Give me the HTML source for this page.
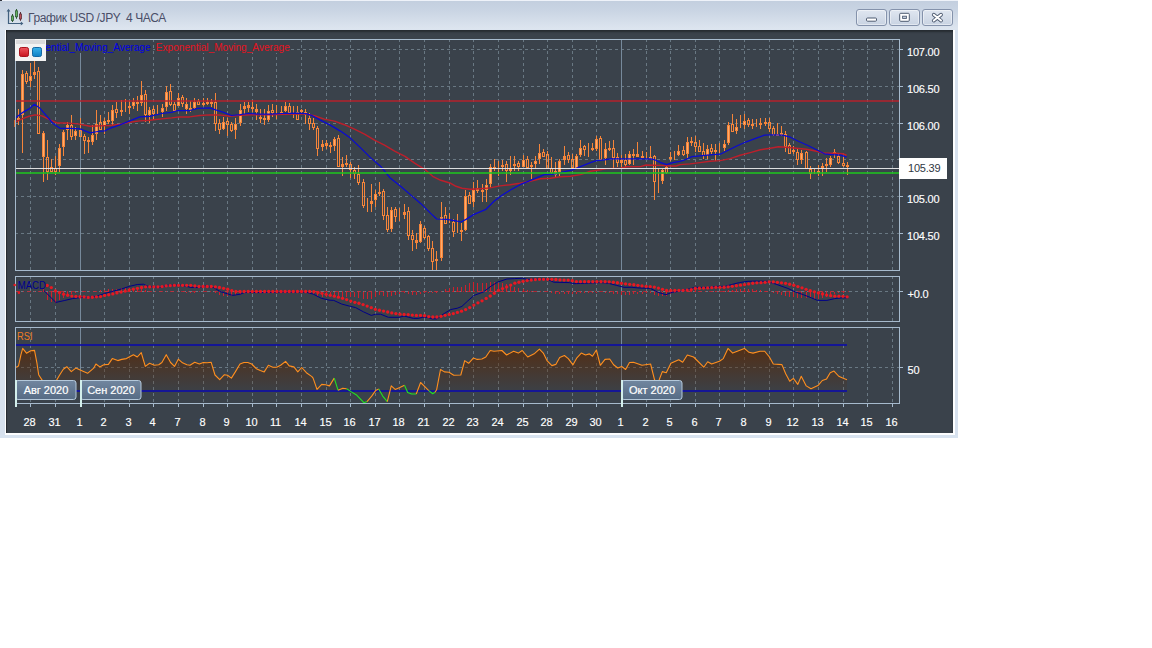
<!DOCTYPE html>
<html lang="ru">
<head>
<meta charset="utf-8">
<title>График USD /JPY 4 ЧАСА</title>
<style>
html,body{margin:0;padding:0;background:#fff;}
body{width:1152px;height:648px;position:relative;overflow:hidden;font-family:"Liberation Sans",sans-serif;}
.win{position:absolute;left:0;top:0;width:958px;height:438px;background:linear-gradient(to bottom,#eef2f9 0,#eef2f9 1px,#c3cfdf 1px,#c9d4e3 10px,#dde5ef 29px,#d7e1ee 31px,#d7e1ee 100%);overflow:hidden;}
.win:before{content:"";position:absolute;left:0;top:0;width:2px;height:1px;background:#30343c;}
.title{position:absolute;left:28px;top:10px;font-size:12px;line-height:16px;color:#4a4e68;white-space:pre;letter-spacing:-0.4px;}
.btn{position:absolute;top:9px;width:29px;height:15px;border:1px solid #8492ab;border-radius:3px;background:linear-gradient(to bottom,#dfe6f0,#c9d3e2);box-shadow:inset 0 0 0 1px rgba(255,255,255,.45);}
.dark{position:absolute;left:6px;top:30px;width:947px;height:403px;background:#3a424b;box-shadow:inset 0 2px 2px rgba(0,0,0,.35), inset 1px 0 0 rgba(0,0,0,.25);}
.rb{position:absolute;left:5px;top:30px;width:950px;height:405px;background:#fdfeff;}
.bb{position:absolute;left:0;top:435px;width:958px;height:3px;background:#d8e3f0;}
.chart{position:absolute;left:0;top:0;}
.chart text{font-family:"Liberation Sans",sans-serif;}
.lg{font-size:11px;}
.ax{font-size:11px;fill:#ffffff;letter-spacing:-0.2px;stroke:#ffffff;stroke-width:0.15px;}
.ml{font-size:11px;fill:#ffffff;stroke:#ffffff;stroke-width:0.2px;}
.ico{position:absolute;left:0;top:0;}
</style>
</head>
<body>
<div class="win">
<svg class="ico" width="28" height="30" viewBox="0 0 28 30">
<path d="M8.5 10 V23.5 H22" fill="none" stroke="#41607f" stroke-width="1.2"/>
<path d="M6.6 11.4 L8.5 8.8 L10.4 11.4 Z M20.8 21.6 L23.4 23.5 L20.8 25.4 Z" fill="#41607f"/>
<g stroke-width="1">
<line x1="12.5" y1="14" x2="12.5" y2="22" stroke="#2f5a33"/><rect x="11.5" y="16" width="2" height="4.5" fill="#63b45f" stroke="#2f5a33" stroke-width="0.8"/>
<line x1="16.5" y1="9" x2="16.5" y2="18.8" stroke="#2f5a33"/><rect x="15.5" y="10.8" width="2" height="6" fill="#63b45f" stroke="#2f5a33" stroke-width="0.8"/>
<line x1="20.5" y1="12" x2="20.5" y2="20.8" stroke="#5a3038"/><rect x="19.5" y="14" width="2" height="5" fill="#c0505a" stroke="#5a3038" stroke-width="0.8"/>
</g>
</svg>
<div class="title">График USD /JPY  4 ЧАСА</div>
<div class="btn" style="left:856px"><svg width="29" height="15" viewBox="0 0 29 15"><rect x="9.5" y="8" width="10" height="3.2" rx="1" fill="#fff" stroke="#4d5a70" stroke-width="1"/></svg></div>
<div class="btn" style="left:889px"><svg width="29" height="15" viewBox="0 0 29 15"><rect x="9.7" y="3.3" width="9.6" height="8" rx="1" fill="#fff" stroke="#4d5a70" stroke-width="1"/><rect x="12.6" y="6.2" width="3.8" height="2.2" fill="#c9d3e2" stroke="#4d5a70" stroke-width="0.9"/></svg></div>
<div class="btn" style="left:922px"><svg width="29" height="15" viewBox="0 0 29 15"><path d="M10.8 4.7 L18.0 10.6 M18.0 4.7 L10.8 10.6" stroke="#4d5a70" stroke-width="3.8" stroke-linecap="round"/><path d="M10.8 4.7 L18.0 10.6 M18.0 4.7 L10.8 10.6" stroke="#fff" stroke-width="2" stroke-linecap="round"/></svg></div>
<div class="rb"></div>
<div class="bb"></div>
<div class="dark"></div>
<svg class="chart" width="958" height="438" viewBox="0 0 958 438">
<defs>
<linearGradient id="rsig" gradientUnits="userSpaceOnUse" x1="0" y1="345" x2="0" y2="392"><stop offset="0" stop-color="#5c2700" stop-opacity="0.78"/><stop offset="0.5" stop-color="#5c2700" stop-opacity="0.40"/><stop offset="1" stop-color="#5c2700" stop-opacity="0.06"/></linearGradient>
<linearGradient id="redsq" x1="0" y1="0" x2="0" y2="1"><stop offset="0" stop-color="#f0565e"/><stop offset="1" stop-color="#c8141f"/></linearGradient>
<linearGradient id="bluesq" x1="0" y1="0" x2="0" y2="1"><stop offset="0" stop-color="#3cb4ea"/><stop offset="1" stop-color="#0f7fc4"/></linearGradient>
<linearGradient id="mlab" x1="0" y1="0" x2="0" y2="1"><stop offset="0" stop-color="#71869f"/><stop offset="1" stop-color="#566b84"/></linearGradient>
<clipPath id="cm"><rect x="16" y="40" width="883" height="230"/></clipPath>
<clipPath id="cd"><rect x="16" y="277" width="883" height="44"/></clipPath>
<clipPath id="cr"><rect x="16" y="328" width="883" height="75"/></clipPath>
</defs>
<g shape-rendering="crispEdges" fill="none" stroke="#697883" stroke-width="1" stroke-dasharray="3 3">
<line x1="30.5" y1="39" x2="30.5" y2="270"/>
<line x1="55.5" y1="39" x2="55.5" y2="270"/>
<line x1="104.5" y1="39" x2="104.5" y2="270"/>
<line x1="129.5" y1="39" x2="129.5" y2="270"/>
<line x1="153.5" y1="39" x2="153.5" y2="270"/>
<line x1="178.5" y1="39" x2="178.5" y2="270"/>
<line x1="203.5" y1="39" x2="203.5" y2="270"/>
<line x1="227.5" y1="39" x2="227.5" y2="270"/>
<line x1="252.5" y1="39" x2="252.5" y2="270"/>
<line x1="276.5" y1="39" x2="276.5" y2="270"/>
<line x1="301.5" y1="39" x2="301.5" y2="270"/>
<line x1="326.5" y1="39" x2="326.5" y2="270"/>
<line x1="350.5" y1="39" x2="350.5" y2="270"/>
<line x1="375.5" y1="39" x2="375.5" y2="270"/>
<line x1="399.5" y1="39" x2="399.5" y2="270"/>
<line x1="424.5" y1="39" x2="424.5" y2="270"/>
<line x1="449.5" y1="39" x2="449.5" y2="270"/>
<line x1="473.5" y1="39" x2="473.5" y2="270"/>
<line x1="498.5" y1="39" x2="498.5" y2="270"/>
<line x1="523.5" y1="39" x2="523.5" y2="270"/>
<line x1="547.5" y1="39" x2="547.5" y2="270"/>
<line x1="572.5" y1="39" x2="572.5" y2="270"/>
<line x1="596.5" y1="39" x2="596.5" y2="270"/>
<line x1="646.5" y1="39" x2="646.5" y2="270"/>
<line x1="670.5" y1="39" x2="670.5" y2="270"/>
<line x1="695.5" y1="39" x2="695.5" y2="270"/>
<line x1="719.5" y1="39" x2="719.5" y2="270"/>
<line x1="744.5" y1="39" x2="744.5" y2="270"/>
<line x1="769.5" y1="39" x2="769.5" y2="270"/>
<line x1="793.5" y1="39" x2="793.5" y2="270"/>
<line x1="818.5" y1="39" x2="818.5" y2="270"/>
<line x1="843.5" y1="39" x2="843.5" y2="270"/>
<line x1="867.5" y1="39" x2="867.5" y2="270"/>
<line x1="892.5" y1="39" x2="892.5" y2="270"/>
<line x1="30.5" y1="276" x2="30.5" y2="321"/>
<line x1="55.5" y1="276" x2="55.5" y2="321"/>
<line x1="104.5" y1="276" x2="104.5" y2="321"/>
<line x1="129.5" y1="276" x2="129.5" y2="321"/>
<line x1="153.5" y1="276" x2="153.5" y2="321"/>
<line x1="178.5" y1="276" x2="178.5" y2="321"/>
<line x1="203.5" y1="276" x2="203.5" y2="321"/>
<line x1="227.5" y1="276" x2="227.5" y2="321"/>
<line x1="252.5" y1="276" x2="252.5" y2="321"/>
<line x1="276.5" y1="276" x2="276.5" y2="321"/>
<line x1="301.5" y1="276" x2="301.5" y2="321"/>
<line x1="326.5" y1="276" x2="326.5" y2="321"/>
<line x1="350.5" y1="276" x2="350.5" y2="321"/>
<line x1="375.5" y1="276" x2="375.5" y2="321"/>
<line x1="399.5" y1="276" x2="399.5" y2="321"/>
<line x1="424.5" y1="276" x2="424.5" y2="321"/>
<line x1="449.5" y1="276" x2="449.5" y2="321"/>
<line x1="473.5" y1="276" x2="473.5" y2="321"/>
<line x1="498.5" y1="276" x2="498.5" y2="321"/>
<line x1="523.5" y1="276" x2="523.5" y2="321"/>
<line x1="547.5" y1="276" x2="547.5" y2="321"/>
<line x1="572.5" y1="276" x2="572.5" y2="321"/>
<line x1="596.5" y1="276" x2="596.5" y2="321"/>
<line x1="646.5" y1="276" x2="646.5" y2="321"/>
<line x1="670.5" y1="276" x2="670.5" y2="321"/>
<line x1="695.5" y1="276" x2="695.5" y2="321"/>
<line x1="719.5" y1="276" x2="719.5" y2="321"/>
<line x1="744.5" y1="276" x2="744.5" y2="321"/>
<line x1="769.5" y1="276" x2="769.5" y2="321"/>
<line x1="793.5" y1="276" x2="793.5" y2="321"/>
<line x1="818.5" y1="276" x2="818.5" y2="321"/>
<line x1="843.5" y1="276" x2="843.5" y2="321"/>
<line x1="867.5" y1="276" x2="867.5" y2="321"/>
<line x1="892.5" y1="276" x2="892.5" y2="321"/>
<line x1="30.5" y1="327" x2="30.5" y2="403"/>
<line x1="55.5" y1="327" x2="55.5" y2="403"/>
<line x1="104.5" y1="327" x2="104.5" y2="403"/>
<line x1="129.5" y1="327" x2="129.5" y2="403"/>
<line x1="153.5" y1="327" x2="153.5" y2="403"/>
<line x1="178.5" y1="327" x2="178.5" y2="403"/>
<line x1="203.5" y1="327" x2="203.5" y2="403"/>
<line x1="227.5" y1="327" x2="227.5" y2="403"/>
<line x1="252.5" y1="327" x2="252.5" y2="403"/>
<line x1="276.5" y1="327" x2="276.5" y2="403"/>
<line x1="301.5" y1="327" x2="301.5" y2="403"/>
<line x1="326.5" y1="327" x2="326.5" y2="403"/>
<line x1="350.5" y1="327" x2="350.5" y2="403"/>
<line x1="375.5" y1="327" x2="375.5" y2="403"/>
<line x1="399.5" y1="327" x2="399.5" y2="403"/>
<line x1="424.5" y1="327" x2="424.5" y2="403"/>
<line x1="449.5" y1="327" x2="449.5" y2="403"/>
<line x1="473.5" y1="327" x2="473.5" y2="403"/>
<line x1="498.5" y1="327" x2="498.5" y2="403"/>
<line x1="523.5" y1="327" x2="523.5" y2="403"/>
<line x1="547.5" y1="327" x2="547.5" y2="403"/>
<line x1="572.5" y1="327" x2="572.5" y2="403"/>
<line x1="596.5" y1="327" x2="596.5" y2="403"/>
<line x1="646.5" y1="327" x2="646.5" y2="403"/>
<line x1="670.5" y1="327" x2="670.5" y2="403"/>
<line x1="695.5" y1="327" x2="695.5" y2="403"/>
<line x1="719.5" y1="327" x2="719.5" y2="403"/>
<line x1="744.5" y1="327" x2="744.5" y2="403"/>
<line x1="769.5" y1="327" x2="769.5" y2="403"/>
<line x1="793.5" y1="327" x2="793.5" y2="403"/>
<line x1="818.5" y1="327" x2="818.5" y2="403"/>
<line x1="843.5" y1="327" x2="843.5" y2="403"/>
<line x1="867.5" y1="327" x2="867.5" y2="403"/>
<line x1="892.5" y1="327" x2="892.5" y2="403"/>
<line x1="15" y1="49.5" x2="899" y2="49.5"/>
<line x1="15" y1="86.5" x2="899" y2="86.5"/>
<line x1="15" y1="123.5" x2="899" y2="123.5"/>
<line x1="15" y1="159.5" x2="899" y2="159.5"/>
<line x1="15" y1="196.5" x2="899" y2="196.5"/>
<line x1="15" y1="233.5" x2="899" y2="233.5"/>
<line x1="15" y1="291.5" x2="899" y2="291.5"/>
<line x1="15" y1="367.5" x2="899" y2="367.5"/>
</g>
<g shape-rendering="crispEdges" stroke="#76899b" stroke-width="1">
<line x1="621.5" y1="39" x2="621.5" y2="270"/>
<line x1="80.5" y1="39" x2="80.5" y2="270"/>
<line x1="621.5" y1="276" x2="621.5" y2="321"/>
<line x1="80.5" y1="276" x2="80.5" y2="321"/>
<line x1="621.5" y1="327" x2="621.5" y2="403"/>
<line x1="80.5" y1="327" x2="80.5" y2="403"/>
</g>
<g shape-rendering="crispEdges" fill="none" stroke="#a6bacd" stroke-width="1">
<rect x="15.5" y="39.5" width="884" height="231"/>
<rect x="15.5" y="276.5" width="884" height="45"/>
<rect x="15.5" y="327.5" width="884" height="76"/>
<line x1="900" y1="49.5" x2="903" y2="49.5"/>
<line x1="900" y1="86.5" x2="903" y2="86.5"/>
<line x1="900" y1="123.5" x2="903" y2="123.5"/>
<line x1="900" y1="196.5" x2="903" y2="196.5"/>
<line x1="900" y1="233.5" x2="903" y2="233.5"/>
<line x1="900" y1="291.5" x2="903" y2="291.5"/>
<line x1="900" y1="367.5" x2="903" y2="367.5"/>
<line x1="30.5" y1="404" x2="30.5" y2="407"/>
<line x1="55.5" y1="404" x2="55.5" y2="407"/>
<line x1="80.5" y1="404" x2="80.5" y2="407"/>
<line x1="104.5" y1="404" x2="104.5" y2="407"/>
<line x1="129.5" y1="404" x2="129.5" y2="407"/>
<line x1="153.5" y1="404" x2="153.5" y2="407"/>
<line x1="178.5" y1="404" x2="178.5" y2="407"/>
<line x1="203.5" y1="404" x2="203.5" y2="407"/>
<line x1="227.5" y1="404" x2="227.5" y2="407"/>
<line x1="252.5" y1="404" x2="252.5" y2="407"/>
<line x1="276.5" y1="404" x2="276.5" y2="407"/>
<line x1="301.5" y1="404" x2="301.5" y2="407"/>
<line x1="326.5" y1="404" x2="326.5" y2="407"/>
<line x1="350.5" y1="404" x2="350.5" y2="407"/>
<line x1="375.5" y1="404" x2="375.5" y2="407"/>
<line x1="399.5" y1="404" x2="399.5" y2="407"/>
<line x1="424.5" y1="404" x2="424.5" y2="407"/>
<line x1="449.5" y1="404" x2="449.5" y2="407"/>
<line x1="473.5" y1="404" x2="473.5" y2="407"/>
<line x1="498.5" y1="404" x2="498.5" y2="407"/>
<line x1="523.5" y1="404" x2="523.5" y2="407"/>
<line x1="547.5" y1="404" x2="547.5" y2="407"/>
<line x1="572.5" y1="404" x2="572.5" y2="407"/>
<line x1="596.5" y1="404" x2="596.5" y2="407"/>
<line x1="621.5" y1="404" x2="621.5" y2="407"/>
<line x1="646.5" y1="404" x2="646.5" y2="407"/>
<line x1="670.5" y1="404" x2="670.5" y2="407"/>
<line x1="695.5" y1="404" x2="695.5" y2="407"/>
<line x1="719.5" y1="404" x2="719.5" y2="407"/>
<line x1="744.5" y1="404" x2="744.5" y2="407"/>
<line x1="769.5" y1="404" x2="769.5" y2="407"/>
<line x1="793.5" y1="404" x2="793.5" y2="407"/>
<line x1="818.5" y1="404" x2="818.5" y2="407"/>
<line x1="843.5" y1="404" x2="843.5" y2="407"/>
<line x1="867.5" y1="404" x2="867.5" y2="407"/>
<line x1="892.5" y1="404" x2="892.5" y2="407"/>
</g>
<rect x="14" y="120" width="1" height="6.5" fill="#c8642c" shape-rendering="crispEdges"/>
<g clip-path="url(#cm)">
<g shape-rendering="crispEdges">
<rect x="18" y="108.9" width="1" height="16.1" fill="#f6853a"/>
<rect x="17" y="118.3" width="3" height="2" fill="#f6853a"/>
<rect x="22" y="70.2" width="1" height="82.6" fill="#f6853a"/>
<rect x="21.5" y="74.5" width="2" height="39.6" fill="#ffac6b" stroke="#f6853a" stroke-width="1"/>
<rect x="26" y="70.9" width="1" height="1.7" fill="#f6853a"/>
<rect x="26" y="82" width="1" height="2" fill="#f6853a"/>
<rect x="25.5" y="73.1" width="2" height="8.4" fill="none" stroke="#f6853a" stroke-width="1"/>
<rect x="30" y="63.2" width="1" height="24" fill="#f6853a"/>
<rect x="29.5" y="76.7" width="2" height="3.8" fill="#ffac6b" stroke="#f6853a" stroke-width="1"/>
<rect x="34" y="44" width="1" height="34.8" fill="#f6853a"/>
<rect x="33" y="72.3" width="3" height="2.5" fill="#f6853a"/>
<rect x="38" y="67.2" width="1" height="3.8" fill="#f6853a"/>
<rect x="37.5" y="71.5" width="2" height="61.75" fill="none" stroke="#f6853a" stroke-width="1"/>
<rect x="43" y="131" width="1" height="51" fill="#f6853a"/>
<rect x="42.5" y="133.1" width="2" height="23.6" fill="#ffac6b" stroke="#f6853a" stroke-width="1"/>
<rect x="47" y="140" width="1" height="17" fill="#f6853a"/>
<rect x="47" y="171.5" width="1" height="8.5" fill="#f6853a"/>
<rect x="46.5" y="157.5" width="2" height="13.5" fill="none" stroke="#f6853a" stroke-width="1"/>
<rect x="51" y="159" width="1" height="7.7" fill="#f6853a"/>
<rect x="51" y="171.5" width="1" height="0.5" fill="#f6853a"/>
<rect x="50.5" y="167.2" width="2" height="3.8" fill="none" stroke="#f6853a" stroke-width="1"/>
<rect x="55" y="155.5" width="1" height="12.1" fill="#f6853a"/>
<rect x="55" y="171.5" width="1" height="3.5" fill="#f6853a"/>
<rect x="54.5" y="168.1" width="2" height="2.9" fill="none" stroke="#f6853a" stroke-width="1"/>
<rect x="59" y="144" width="1" height="28" fill="#f6853a"/>
<rect x="58.5" y="148.5" width="2" height="17" fill="#ffac6b" stroke="#f6853a" stroke-width="1"/>
<rect x="63" y="130" width="1" height="25.5" fill="#f6853a"/>
<rect x="62.5" y="132.2" width="2" height="14.3" fill="#ffac6b" stroke="#f6853a" stroke-width="1"/>
<rect x="67" y="121.5" width="1" height="18.5" fill="#f6853a"/>
<rect x="66.5" y="125.2" width="2" height="4.3" fill="#ffac6b" stroke="#f6853a" stroke-width="1"/>
<rect x="71" y="115" width="1" height="9.7" fill="#f6853a"/>
<rect x="71" y="136.8" width="1" height="3.2" fill="#f6853a"/>
<rect x="70.5" y="125.2" width="2" height="11.1" fill="none" stroke="#f6853a" stroke-width="1"/>
<rect x="75" y="127" width="1" height="13" fill="#f6853a"/>
<rect x="74.5" y="131.3" width="2" height="4.6" fill="#ffac6b" stroke="#f6853a" stroke-width="1"/>
<rect x="80" y="118" width="1" height="12" fill="#f6853a"/>
<rect x="79.5" y="130.5" width="2" height="5.8" fill="none" stroke="#f6853a" stroke-width="1"/>
<rect x="84" y="134" width="1" height="1.8" fill="#f6853a"/>
<rect x="84" y="141" width="1" height="13" fill="#f6853a"/>
<rect x="83.5" y="136.3" width="2" height="4.2" fill="none" stroke="#f6853a" stroke-width="1"/>
<rect x="88" y="137" width="1" height="15.8" fill="#f6853a"/>
<rect x="87" y="140" width="3" height="2.4" fill="#f6853a"/>
<rect x="92" y="124.7" width="1" height="20.3" fill="#f6853a"/>
<rect x="91.5" y="135.2" width="2" height="6.7" fill="#ffac6b" stroke="#f6853a" stroke-width="1"/>
<rect x="96" y="110" width="1" height="30" fill="#f6853a"/>
<rect x="95.5" y="124.8" width="2" height="8.3" fill="#ffac6b" stroke="#f6853a" stroke-width="1"/>
<rect x="100" y="115" width="1" height="7" fill="#f6853a"/>
<rect x="99.5" y="122.5" width="2" height="7" fill="none" stroke="#f6853a" stroke-width="1"/>
<rect x="104" y="117.8" width="1" height="16.2" fill="#f6853a"/>
<rect x="103.5" y="121.3" width="2" height="4.6" fill="#ffac6b" stroke="#f6853a" stroke-width="1"/>
<rect x="108" y="112.2" width="1" height="11.4" fill="#f6853a"/>
<rect x="107" y="120" width="3" height="2" fill="#f6853a"/>
<rect x="112" y="105.3" width="1" height="19.4" fill="#f6853a"/>
<rect x="111.5" y="110.5" width="2" height="9.5" fill="#ffac6b" stroke="#f6853a" stroke-width="1"/>
<rect x="116" y="102" width="1" height="7" fill="#f6853a"/>
<rect x="116" y="112.8" width="1" height="5.2" fill="#f6853a"/>
<rect x="115.5" y="109.5" width="2" height="2.8" fill="none" stroke="#f6853a" stroke-width="1"/>
<rect x="121" y="100.3" width="1" height="15.7" fill="#f6853a"/>
<rect x="120" y="110" width="3" height="2" fill="#f6853a"/>
<rect x="125" y="98.9" width="1" height="13.2" fill="#f6853a"/>
<rect x="129" y="101.4" width="1" height="12.6" fill="#f6853a"/>
<rect x="128" y="106.3" width="3" height="2" fill="#f6853a"/>
<rect x="133" y="98.2" width="1" height="11" fill="#f6853a"/>
<rect x="132.5" y="102.1" width="2" height="3.1" fill="#ffac6b" stroke="#f6853a" stroke-width="1"/>
<rect x="137" y="96.1" width="1" height="14.7" fill="#f6853a"/>
<rect x="136" y="101.7" width="3" height="2.7" fill="#f6853a"/>
<rect x="141" y="80.8" width="1" height="24.9" fill="#f6853a"/>
<rect x="140.5" y="95.2" width="2" height="7.3" fill="#ffac6b" stroke="#f6853a" stroke-width="1"/>
<rect x="145" y="89.9" width="1" height="4.1" fill="#f6853a"/>
<rect x="145" y="115.4" width="1" height="6.8" fill="#f6853a"/>
<rect x="144.5" y="94.5" width="2" height="20.4" fill="none" stroke="#f6853a" stroke-width="1"/>
<rect x="149" y="107" width="1" height="16" fill="#f6853a"/>
<rect x="148.5" y="110.9" width="2" height="3.2" fill="#ffac6b" stroke="#f6853a" stroke-width="1"/>
<rect x="153" y="105.5" width="1" height="3.5" fill="#f6853a"/>
<rect x="153" y="113.9" width="1" height="6.1" fill="#f6853a"/>
<rect x="152.5" y="109.5" width="2" height="3.9" fill="none" stroke="#f6853a" stroke-width="1"/>
<rect x="157" y="104.9" width="1" height="9" fill="#f6853a"/>
<rect x="162" y="104" width="1" height="12.6" fill="#f6853a"/>
<rect x="161.5" y="108.2" width="2" height="3" fill="#ffac6b" stroke="#f6853a" stroke-width="1"/>
<rect x="166" y="86.4" width="1" height="25" fill="#f6853a"/>
<rect x="165.5" y="92.7" width="2" height="13.6" fill="#ffac6b" stroke="#f6853a" stroke-width="1"/>
<rect x="170" y="83.9" width="1" height="7.2" fill="#f6853a"/>
<rect x="170" y="104.7" width="1" height="1.1" fill="#f6853a"/>
<rect x="169.5" y="91.6" width="2" height="12.6" fill="none" stroke="#f6853a" stroke-width="1"/>
<rect x="174" y="102.2" width="1" height="1.8" fill="#f6853a"/>
<rect x="173.5" y="104.5" width="2" height="5.6" fill="none" stroke="#f6853a" stroke-width="1"/>
<rect x="178" y="92.9" width="1" height="13.5" fill="#f6853a"/>
<rect x="177.5" y="98.7" width="2" height="6.6" fill="#ffac6b" stroke="#f6853a" stroke-width="1"/>
<rect x="182" y="95" width="1" height="2.1" fill="#f6853a"/>
<rect x="182" y="104.4" width="1" height="2.4" fill="#f6853a"/>
<rect x="181.5" y="97.6" width="2" height="6.3" fill="none" stroke="#f6853a" stroke-width="1"/>
<rect x="186" y="98.2" width="1" height="16" fill="#f6853a"/>
<rect x="185.5" y="104.5" width="2" height="3.9" fill="#ffac6b" stroke="#f6853a" stroke-width="1"/>
<rect x="190" y="100.6" width="1" height="11.1" fill="#f6853a"/>
<rect x="189" y="108.2" width="3" height="2" fill="#f6853a"/>
<rect x="194" y="98.2" width="1" height="10.7" fill="#f6853a"/>
<rect x="193.5" y="102.2" width="2" height="5.1" fill="#ffac6b" stroke="#f6853a" stroke-width="1"/>
<rect x="198" y="99.2" width="1" height="2.05" fill="#f6853a"/>
<rect x="197.5" y="101.75" width="2" height="2.45" fill="none" stroke="#f6853a" stroke-width="1"/>
<rect x="203" y="98.2" width="1" height="8.2" fill="#f6853a"/>
<rect x="202" y="102.6" width="3" height="2" fill="#f6853a"/>
<rect x="207" y="97.8" width="1" height="7.6" fill="#f6853a"/>
<rect x="206" y="101.7" width="3" height="2.3" fill="#f6853a"/>
<rect x="211" y="99.2" width="1" height="8" fill="#f6853a"/>
<rect x="210" y="102.2" width="3" height="2" fill="#f6853a"/>
<rect x="215" y="92.9" width="1" height="8.8" fill="#f6853a"/>
<rect x="215" y="123.5" width="1" height="7.3" fill="#f6853a"/>
<rect x="214.5" y="102.2" width="2" height="20.8" fill="none" stroke="#f6853a" stroke-width="1"/>
<rect x="219" y="118.9" width="1" height="3.9" fill="#f6853a"/>
<rect x="219" y="129.7" width="1" height="4.2" fill="#f6853a"/>
<rect x="218.5" y="123.3" width="2" height="5.9" fill="none" stroke="#f6853a" stroke-width="1"/>
<rect x="223" y="116.5" width="1" height="13.5" fill="#f6853a"/>
<rect x="222.5" y="122.5" width="2" height="6" fill="#ffac6b" stroke="#f6853a" stroke-width="1"/>
<rect x="227" y="117.9" width="1" height="3.2" fill="#f6853a"/>
<rect x="227" y="124.9" width="1" height="11.1" fill="#f6853a"/>
<rect x="226.5" y="121.6" width="2" height="2.8" fill="none" stroke="#f6853a" stroke-width="1"/>
<rect x="231" y="122" width="1" height="2.2" fill="#f6853a"/>
<rect x="231" y="131.1" width="1" height="0.7" fill="#f6853a"/>
<rect x="230.5" y="124.7" width="2" height="5.9" fill="none" stroke="#f6853a" stroke-width="1"/>
<rect x="235" y="117.9" width="1" height="20.85" fill="#f6853a"/>
<rect x="234.5" y="124.7" width="2" height="4.8" fill="#ffac6b" stroke="#f6853a" stroke-width="1"/>
<rect x="240" y="104" width="1" height="21.6" fill="#f6853a"/>
<rect x="239.5" y="110.8" width="2" height="11.5" fill="#ffac6b" stroke="#f6853a" stroke-width="1"/>
<rect x="244" y="102.2" width="1" height="11.55" fill="#f6853a"/>
<rect x="243" y="106.1" width="3" height="2.8" fill="#f6853a"/>
<rect x="248" y="102.2" width="1" height="9.5" fill="#f6853a"/>
<rect x="247" y="105.4" width="3" height="2.1" fill="#f6853a"/>
<rect x="252" y="99.9" width="1" height="12.5" fill="#f6853a"/>
<rect x="251" y="106.8" width="3" height="2.4" fill="#f6853a"/>
<rect x="256" y="104" width="1" height="16" fill="#f6853a"/>
<rect x="255" y="108.9" width="3" height="2.8" fill="#f6853a"/>
<rect x="260" y="108.9" width="1" height="13.9" fill="#f6853a"/>
<rect x="259" y="116.5" width="3" height="2" fill="#f6853a"/>
<rect x="264" y="109.2" width="1" height="15.7" fill="#f6853a"/>
<rect x="263" y="117.9" width="3" height="2.4" fill="#f6853a"/>
<rect x="268" y="105" width="1" height="17" fill="#f6853a"/>
<rect x="267.5" y="111.9" width="2" height="7.9" fill="#ffac6b" stroke="#f6853a" stroke-width="1"/>
<rect x="272" y="104" width="1" height="6" fill="#f6853a"/>
<rect x="272" y="113.3" width="1" height="3.2" fill="#f6853a"/>
<rect x="271.5" y="110.5" width="2" height="2.3" fill="none" stroke="#f6853a" stroke-width="1"/>
<rect x="276" y="105.4" width="1" height="13.2" fill="#f6853a"/>
<rect x="281" y="105.8" width="1" height="7.95" fill="#f6853a"/>
<rect x="280" y="111.7" width="3" height="2" fill="#f6853a"/>
<rect x="285" y="102.2" width="1" height="10.2" fill="#f6853a"/>
<rect x="284.5" y="106.9" width="2" height="4" fill="#ffac6b" stroke="#f6853a" stroke-width="1"/>
<rect x="289" y="103" width="1" height="2.8" fill="#f6853a"/>
<rect x="288.5" y="106.3" width="2" height="6" fill="none" stroke="#f6853a" stroke-width="1"/>
<rect x="293" y="106.1" width="1" height="11.8" fill="#f6853a"/>
<rect x="297" y="106.1" width="1" height="5.6" fill="#f6853a"/>
<rect x="296.5" y="112.2" width="2" height="7" fill="none" stroke="#f6853a" stroke-width="1"/>
<rect x="301" y="108.9" width="1" height="4.4" fill="#f6853a"/>
<rect x="300" y="110.3" width="3" height="2.1" fill="#f6853a"/>
<rect x="305" y="108.9" width="1" height="14.6" fill="#f6853a"/>
<rect x="304" y="112.4" width="3" height="2.3" fill="#f6853a"/>
<rect x="309" y="113" width="1" height="4.9" fill="#f6853a"/>
<rect x="309" y="124.2" width="1" height="5.8" fill="#f6853a"/>
<rect x="308.5" y="118.4" width="2" height="5.3" fill="none" stroke="#f6853a" stroke-width="1"/>
<rect x="313" y="117.9" width="1" height="5.1" fill="#f6853a"/>
<rect x="313" y="128.4" width="1" height="1.6" fill="#f6853a"/>
<rect x="312.5" y="123.5" width="2" height="4.4" fill="none" stroke="#f6853a" stroke-width="1"/>
<rect x="317" y="125.7" width="1" height="2" fill="#f6853a"/>
<rect x="317" y="148.9" width="1" height="6.6" fill="#f6853a"/>
<rect x="316.5" y="128.2" width="2" height="20.2" fill="none" stroke="#f6853a" stroke-width="1"/>
<rect x="322" y="140.3" width="1" height="10.4" fill="#f6853a"/>
<rect x="321" y="144.2" width="3" height="3" fill="#f6853a"/>
<rect x="326" y="140.3" width="1" height="9" fill="#f6853a"/>
<rect x="325" y="143" width="3" height="2.8" fill="#f6853a"/>
<rect x="330" y="142.4" width="1" height="10.4" fill="#f6853a"/>
<rect x="329" y="145" width="3" height="2" fill="#f6853a"/>
<rect x="334" y="137.2" width="1" height="13.5" fill="#f6853a"/>
<rect x="333.5" y="139.7" width="2" height="5.4" fill="#ffac6b" stroke="#f6853a" stroke-width="1"/>
<rect x="338" y="135" width="1" height="3.2" fill="#f6853a"/>
<rect x="337.5" y="138.7" width="2" height="28.2" fill="none" stroke="#f6853a" stroke-width="1"/>
<rect x="342" y="156.9" width="1" height="18.8" fill="#f6853a"/>
<rect x="341" y="164.2" width="3" height="2.5" fill="#f6853a"/>
<rect x="346" y="154.9" width="1" height="12.5" fill="#f6853a"/>
<rect x="345" y="163.2" width="3" height="2" fill="#f6853a"/>
<rect x="350" y="161.8" width="1" height="2.1" fill="#f6853a"/>
<rect x="350" y="170.1" width="1" height="7.7" fill="#f6853a"/>
<rect x="349.5" y="164.4" width="2" height="5.2" fill="none" stroke="#f6853a" stroke-width="1"/>
<rect x="354" y="167.4" width="1" height="2.7" fill="#f6853a"/>
<rect x="354" y="174.3" width="1" height="4.2" fill="#f6853a"/>
<rect x="353.5" y="170.6" width="2" height="3.2" fill="none" stroke="#f6853a" stroke-width="1"/>
<rect x="358" y="164.6" width="1" height="9.7" fill="#f6853a"/>
<rect x="358" y="182.7" width="1" height="2.1" fill="#f6853a"/>
<rect x="357.5" y="174.8" width="2" height="7.4" fill="none" stroke="#f6853a" stroke-width="1"/>
<rect x="363" y="179.4" width="1" height="2.6" fill="#f6853a"/>
<rect x="363" y="206.4" width="1" height="1.4" fill="#f6853a"/>
<rect x="362.5" y="182.5" width="2" height="23.4" fill="none" stroke="#f6853a" stroke-width="1"/>
<rect x="367" y="198" width="1" height="14" fill="#f6853a"/>
<rect x="371" y="184.2" width="1" height="27.5" fill="#f6853a"/>
<rect x="370" y="200.8" width="3" height="2.8" fill="#f6853a"/>
<rect x="375" y="189.7" width="1" height="17.3" fill="#f6853a"/>
<rect x="374.5" y="194.4" width="2" height="5.2" fill="#ffac6b" stroke="#f6853a" stroke-width="1"/>
<rect x="379" y="182" width="1" height="13.6" fill="#f6853a"/>
<rect x="378" y="191.8" width="3" height="2.1" fill="#f6853a"/>
<rect x="383" y="189" width="1" height="2.1" fill="#f6853a"/>
<rect x="383" y="215.8" width="1" height="4.2" fill="#f6853a"/>
<rect x="382.5" y="191.6" width="2" height="23.7" fill="none" stroke="#f6853a" stroke-width="1"/>
<rect x="387" y="207" width="1" height="7.7" fill="#f6853a"/>
<rect x="387" y="230" width="1" height="2" fill="#f6853a"/>
<rect x="386.5" y="215.2" width="2" height="14.3" fill="none" stroke="#f6853a" stroke-width="1"/>
<rect x="391" y="207" width="1" height="24.7" fill="#f6853a"/>
<rect x="390.5" y="210.4" width="2" height="18.4" fill="#ffac6b" stroke="#f6853a" stroke-width="1"/>
<rect x="395" y="207" width="1" height="1.5" fill="#f6853a"/>
<rect x="395" y="216.8" width="1" height="4.9" fill="#f6853a"/>
<rect x="394.5" y="209" width="2" height="7.3" fill="none" stroke="#f6853a" stroke-width="1"/>
<rect x="399" y="207.5" width="1" height="13.9" fill="#f6853a"/>
<rect x="404" y="203.9" width="1" height="15" fill="#f6853a"/>
<rect x="403" y="212" width="3" height="2.7" fill="#f6853a"/>
<rect x="408" y="207" width="1" height="3.8" fill="#f6853a"/>
<rect x="408" y="235.6" width="1" height="4.4" fill="#f6853a"/>
<rect x="407.5" y="211.3" width="2" height="23.8" fill="none" stroke="#f6853a" stroke-width="1"/>
<rect x="412" y="230" width="1" height="4.9" fill="#f6853a"/>
<rect x="412" y="240.4" width="1" height="10.4" fill="#f6853a"/>
<rect x="411.5" y="235.4" width="2" height="4.5" fill="none" stroke="#f6853a" stroke-width="1"/>
<rect x="416" y="232.8" width="1" height="16.2" fill="#f6853a"/>
<rect x="415" y="240" width="3" height="2.5" fill="#f6853a"/>
<rect x="420" y="221" width="1" height="21.8" fill="#f6853a"/>
<rect x="419.5" y="224.25" width="2" height="17.05" fill="#ffac6b" stroke="#f6853a" stroke-width="1"/>
<rect x="424" y="225.8" width="1" height="2.1" fill="#f6853a"/>
<rect x="424" y="238.3" width="1" height="1.1" fill="#f6853a"/>
<rect x="423.5" y="228.4" width="2" height="9.4" fill="none" stroke="#f6853a" stroke-width="1"/>
<rect x="428" y="234.9" width="1" height="1.35" fill="#f6853a"/>
<rect x="428" y="248.75" width="1" height="2.05" fill="#f6853a"/>
<rect x="427.5" y="236.75" width="2" height="11.5" fill="none" stroke="#f6853a" stroke-width="1"/>
<rect x="432" y="241.1" width="1" height="6.9" fill="#f6853a"/>
<rect x="432" y="262" width="1" height="8" fill="#f6853a"/>
<rect x="431.5" y="248.5" width="2" height="13" fill="none" stroke="#f6853a" stroke-width="1"/>
<rect x="436" y="250.8" width="1" height="19.2" fill="#f6853a"/>
<rect x="435" y="259.2" width="3" height="2" fill="#f6853a"/>
<rect x="441" y="202.2" width="1" height="58.4" fill="#f6853a"/>
<rect x="440.5" y="217.3" width="2" height="39.7" fill="#ffac6b" stroke="#f6853a" stroke-width="1"/>
<rect x="445" y="207" width="1" height="8.4" fill="#f6853a"/>
<rect x="444.5" y="215.9" width="2" height="7.35" fill="none" stroke="#f6853a" stroke-width="1"/>
<rect x="449" y="213" width="1" height="10" fill="#f6853a"/>
<rect x="453" y="218.9" width="1" height="2.8" fill="#f6853a"/>
<rect x="453" y="232" width="1" height="5" fill="#f6853a"/>
<rect x="452.5" y="222.2" width="2" height="9.3" fill="none" stroke="#f6853a" stroke-width="1"/>
<rect x="457" y="214" width="1" height="18.8" fill="#f6853a"/>
<rect x="461" y="223" width="1" height="17.8" fill="#f6853a"/>
<rect x="460" y="230" width="3" height="2" fill="#f6853a"/>
<rect x="465" y="190.4" width="1" height="40.6" fill="#f6853a"/>
<rect x="464.5" y="196.5" width="2" height="33" fill="#ffac6b" stroke="#f6853a" stroke-width="1"/>
<rect x="469" y="192.2" width="1" height="3.1" fill="#f6853a"/>
<rect x="468.5" y="195.8" width="2" height="7.3" fill="none" stroke="#f6853a" stroke-width="1"/>
<rect x="473" y="182" width="1" height="25" fill="#f6853a"/>
<rect x="472.5" y="190.3" width="2" height="11.2" fill="#ffac6b" stroke="#f6853a" stroke-width="1"/>
<rect x="477" y="179.7" width="1" height="12.8" fill="#f6853a"/>
<rect x="476" y="188.2" width="3" height="2.4" fill="#f6853a"/>
<rect x="482" y="184" width="1" height="18" fill="#f6853a"/>
<rect x="481" y="190" width="3" height="2" fill="#f6853a"/>
<rect x="486" y="179" width="1" height="23" fill="#f6853a"/>
<rect x="485.5" y="185.5" width="2" height="4" fill="#ffac6b" stroke="#f6853a" stroke-width="1"/>
<rect x="490" y="164.2" width="1" height="23.8" fill="#f6853a"/>
<rect x="489.5" y="167.7" width="2" height="15.6" fill="#ffac6b" stroke="#f6853a" stroke-width="1"/>
<rect x="494" y="159.2" width="1" height="12.2" fill="#f6853a"/>
<rect x="493" y="166.5" width="3" height="2" fill="#f6853a"/>
<rect x="498" y="161.4" width="1" height="14.2" fill="#f6853a"/>
<rect x="502" y="159.6" width="1" height="11.1" fill="#f6853a"/>
<rect x="501" y="164.7" width="3" height="2.5" fill="#f6853a"/>
<rect x="506" y="161" width="1" height="3.4" fill="#f6853a"/>
<rect x="506" y="171.4" width="1" height="10.4" fill="#f6853a"/>
<rect x="505.5" y="164.9" width="2" height="6" fill="none" stroke="#f6853a" stroke-width="1"/>
<rect x="510" y="156.1" width="1" height="18.8" fill="#f6853a"/>
<rect x="509" y="167.9" width="3" height="2.8" fill="#f6853a"/>
<rect x="514" y="156.1" width="1" height="14.6" fill="#f6853a"/>
<rect x="513" y="164.2" width="3" height="2" fill="#f6853a"/>
<rect x="518" y="161" width="1" height="2" fill="#f6853a"/>
<rect x="518" y="167.2" width="1" height="3.5" fill="#f6853a"/>
<rect x="517.5" y="163.5" width="2" height="3.2" fill="none" stroke="#f6853a" stroke-width="1"/>
<rect x="523" y="154.7" width="1" height="11.8" fill="#f6853a"/>
<rect x="522.5" y="160.5" width="2" height="5.5" fill="#ffac6b" stroke="#f6853a" stroke-width="1"/>
<rect x="527" y="156.4" width="1" height="2.8" fill="#f6853a"/>
<rect x="526.5" y="159.7" width="2" height="7.7" fill="none" stroke="#f6853a" stroke-width="1"/>
<rect x="531" y="161.7" width="1" height="17.3" fill="#f6853a"/>
<rect x="530" y="165.1" width="3" height="2.1" fill="#f6853a"/>
<rect x="535" y="156.1" width="1" height="11.8" fill="#f6853a"/>
<rect x="534.5" y="161.1" width="2" height="2.6" fill="#ffac6b" stroke="#f6853a" stroke-width="1"/>
<rect x="539" y="144.3" width="1" height="19.45" fill="#f6853a"/>
<rect x="538.5" y="153.5" width="2" height="5.2" fill="#ffac6b" stroke="#f6853a" stroke-width="1"/>
<rect x="543" y="148.5" width="1" height="3.7" fill="#f6853a"/>
<rect x="542.5" y="152.7" width="2" height="3.6" fill="none" stroke="#f6853a" stroke-width="1"/>
<rect x="547" y="151.25" width="1" height="2.75" fill="#f6853a"/>
<rect x="547" y="168.6" width="1" height="0.7" fill="#f6853a"/>
<rect x="546.5" y="154.5" width="2" height="13.6" fill="none" stroke="#f6853a" stroke-width="1"/>
<rect x="551" y="157.2" width="1" height="10.7" fill="#f6853a"/>
<rect x="551" y="172.8" width="1" height="0.7" fill="#f6853a"/>
<rect x="550.5" y="168.4" width="2" height="3.9" fill="none" stroke="#f6853a" stroke-width="1"/>
<rect x="555" y="162.4" width="1" height="15.2" fill="#f6853a"/>
<rect x="554.5" y="171.9" width="2" height="2.5" fill="#ffac6b" stroke="#f6853a" stroke-width="1"/>
<rect x="559" y="159.2" width="1" height="16.4" fill="#f6853a"/>
<rect x="558.5" y="161.5" width="2" height="10" fill="#ffac6b" stroke="#f6853a" stroke-width="1"/>
<rect x="564" y="146.1" width="1" height="18.6" fill="#f6853a"/>
<rect x="563" y="156.4" width="3" height="3.2" fill="#f6853a"/>
<rect x="568" y="152.2" width="1" height="2.8" fill="#f6853a"/>
<rect x="568" y="160.3" width="1" height="2.5" fill="#f6853a"/>
<rect x="567.5" y="155.5" width="2" height="4.3" fill="none" stroke="#f6853a" stroke-width="1"/>
<rect x="572" y="154" width="1" height="5.2" fill="#f6853a"/>
<rect x="572" y="167.9" width="1" height="1.4" fill="#f6853a"/>
<rect x="571.5" y="159.7" width="2" height="7.7" fill="none" stroke="#f6853a" stroke-width="1"/>
<rect x="576" y="154.4" width="1" height="13.5" fill="#f6853a"/>
<rect x="575.5" y="156.6" width="2" height="10.8" fill="#ffac6b" stroke="#f6853a" stroke-width="1"/>
<rect x="580" y="140.1" width="1" height="16.7" fill="#f6853a"/>
<rect x="579.5" y="148" width="2" height="6.2" fill="#ffac6b" stroke="#f6853a" stroke-width="1"/>
<rect x="584" y="144.7" width="1" height="1.4" fill="#f6853a"/>
<rect x="584" y="149.9" width="1" height="5.9" fill="#f6853a"/>
<rect x="583.5" y="146.6" width="2" height="2.8" fill="none" stroke="#f6853a" stroke-width="1"/>
<rect x="588" y="143.3" width="1" height="13.5" fill="#f6853a"/>
<rect x="592" y="143.3" width="1" height="7.5" fill="#f6853a"/>
<rect x="591" y="148.2" width="3" height="2" fill="#f6853a"/>
<rect x="596" y="136" width="1" height="14.8" fill="#f6853a"/>
<rect x="595.5" y="139.7" width="2" height="9" fill="#ffac6b" stroke="#f6853a" stroke-width="1"/>
<rect x="600" y="136" width="1" height="2" fill="#f6853a"/>
<rect x="599.5" y="138.5" width="2" height="20.6" fill="none" stroke="#f6853a" stroke-width="1"/>
<rect x="605" y="143.3" width="1" height="21.4" fill="#f6853a"/>
<rect x="604.5" y="149.4" width="2" height="8.3" fill="#ffac6b" stroke="#f6853a" stroke-width="1"/>
<rect x="609" y="141.1" width="1" height="9.7" fill="#f6853a"/>
<rect x="608" y="147.8" width="3" height="2" fill="#f6853a"/>
<rect x="613" y="140.1" width="1" height="8.1" fill="#f6853a"/>
<rect x="613" y="157.5" width="1" height="10.4" fill="#f6853a"/>
<rect x="612.5" y="148.7" width="2" height="8.3" fill="none" stroke="#f6853a" stroke-width="1"/>
<rect x="617" y="153.3" width="1" height="3.9" fill="#f6853a"/>
<rect x="617" y="163" width="1" height="3.5" fill="#f6853a"/>
<rect x="616.5" y="157.7" width="2" height="4.8" fill="none" stroke="#f6853a" stroke-width="1"/>
<rect x="621" y="155" width="1" height="12.7" fill="#f6853a"/>
<rect x="620" y="160.3" width="3" height="2.5" fill="#f6853a"/>
<rect x="625" y="154.1" width="1" height="5.5" fill="#f6853a"/>
<rect x="625" y="164.8" width="1" height="2.2" fill="#f6853a"/>
<rect x="624.5" y="160.1" width="2" height="4.2" fill="none" stroke="#f6853a" stroke-width="1"/>
<rect x="629" y="151" width="1" height="13.9" fill="#f6853a"/>
<rect x="628.5" y="154.7" width="2" height="9" fill="#ffac6b" stroke="#f6853a" stroke-width="1"/>
<rect x="633" y="149.2" width="1" height="15.7" fill="#f6853a"/>
<rect x="632" y="153.75" width="3" height="2" fill="#f6853a"/>
<rect x="637" y="142.2" width="1" height="15" fill="#f6853a"/>
<rect x="636" y="154.2" width="3" height="3" fill="#f6853a"/>
<rect x="642" y="151" width="1" height="6.9" fill="#f6853a"/>
<rect x="641" y="155.8" width="3" height="2.1" fill="#f6853a"/>
<rect x="646" y="151.7" width="1" height="6.9" fill="#f6853a"/>
<rect x="650" y="145.8" width="1" height="12.8" fill="#f6853a"/>
<rect x="649" y="156.5" width="3" height="2" fill="#f6853a"/>
<rect x="654" y="154.7" width="1" height="1.1" fill="#f6853a"/>
<rect x="654" y="182.2" width="1" height="18.1" fill="#f6853a"/>
<rect x="653.5" y="156.3" width="2" height="25.4" fill="none" stroke="#f6853a" stroke-width="1"/>
<rect x="658" y="168.3" width="1" height="24.3" fill="#f6853a"/>
<rect x="662" y="169" width="1" height="14.6" fill="#f6853a"/>
<rect x="661.5" y="170.9" width="2" height="9.4" fill="#ffac6b" stroke="#f6853a" stroke-width="1"/>
<rect x="666" y="164.9" width="1" height="2" fill="#f6853a"/>
<rect x="666" y="173.2" width="1" height="0.7" fill="#f6853a"/>
<rect x="665.5" y="167.4" width="2" height="5.3" fill="none" stroke="#f6853a" stroke-width="1"/>
<rect x="670" y="151.7" width="1" height="9.7" fill="#f6853a"/>
<rect x="669" y="157.2" width="3" height="2" fill="#f6853a"/>
<rect x="674" y="151" width="1" height="9" fill="#f6853a"/>
<rect x="678" y="145" width="1" height="10.8" fill="#f6853a"/>
<rect x="677.5" y="151.5" width="2" height="3.1" fill="#ffac6b" stroke="#f6853a" stroke-width="1"/>
<rect x="683" y="146.1" width="1" height="4.2" fill="#f6853a"/>
<rect x="683" y="155.1" width="1" height="0.7" fill="#f6853a"/>
<rect x="682.5" y="150.8" width="2" height="3.8" fill="none" stroke="#f6853a" stroke-width="1"/>
<rect x="687" y="137.1" width="1" height="20.8" fill="#f6853a"/>
<rect x="686.5" y="142.7" width="2" height="11" fill="#ffac6b" stroke="#f6853a" stroke-width="1"/>
<rect x="691" y="137.1" width="1" height="9" fill="#f6853a"/>
<rect x="690" y="141.25" width="3" height="2" fill="#f6853a"/>
<rect x="695" y="135.7" width="1" height="6.5" fill="#f6853a"/>
<rect x="695" y="146.8" width="1" height="4.9" fill="#f6853a"/>
<rect x="694.5" y="142.7" width="2" height="3.6" fill="none" stroke="#f6853a" stroke-width="1"/>
<rect x="699" y="139.9" width="1" height="6.2" fill="#f6853a"/>
<rect x="698.5" y="146.6" width="2" height="4.6" fill="none" stroke="#f6853a" stroke-width="1"/>
<rect x="703" y="143" width="1" height="8" fill="#f6853a"/>
<rect x="703" y="155.8" width="1" height="2.8" fill="#f6853a"/>
<rect x="702.5" y="151.5" width="2" height="3.8" fill="none" stroke="#f6853a" stroke-width="1"/>
<rect x="707" y="145" width="1" height="14.3" fill="#f6853a"/>
<rect x="706.5" y="149.7" width="2" height="4.5" fill="#ffac6b" stroke="#f6853a" stroke-width="1"/>
<rect x="711" y="144" width="1" height="4.2" fill="#f6853a"/>
<rect x="711" y="151.7" width="1" height="2.7" fill="#f6853a"/>
<rect x="710.5" y="148.7" width="2" height="2.5" fill="none" stroke="#f6853a" stroke-width="1"/>
<rect x="715" y="144" width="1" height="16.7" fill="#f6853a"/>
<rect x="714" y="149.6" width="3" height="2.1" fill="#f6853a"/>
<rect x="719" y="143.3" width="1" height="9.7" fill="#f6853a"/>
<rect x="724" y="139.9" width="1" height="11.1" fill="#f6853a"/>
<rect x="723.5" y="144.5" width="2" height="3.2" fill="#ffac6b" stroke="#f6853a" stroke-width="1"/>
<rect x="728" y="122.2" width="1" height="22.5" fill="#f6853a"/>
<rect x="727.5" y="125.1" width="2" height="17.4" fill="#ffac6b" stroke="#f6853a" stroke-width="1"/>
<rect x="732" y="114.2" width="1" height="9.7" fill="#f6853a"/>
<rect x="731.5" y="124.4" width="2" height="6.6" fill="none" stroke="#f6853a" stroke-width="1"/>
<rect x="736" y="119" width="1" height="14.9" fill="#f6853a"/>
<rect x="735.5" y="127.4" width="2" height="2.9" fill="#ffac6b" stroke="#f6853a" stroke-width="1"/>
<rect x="740" y="114.9" width="1" height="12.9" fill="#f6853a"/>
<rect x="744" y="113.9" width="1" height="15.3" fill="#f6853a"/>
<rect x="743.5" y="121.9" width="2" height="2.6" fill="#ffac6b" stroke="#f6853a" stroke-width="1"/>
<rect x="748" y="118" width="1" height="1.7" fill="#f6853a"/>
<rect x="748" y="125" width="1" height="2.4" fill="#f6853a"/>
<rect x="747.5" y="120.2" width="2" height="4.3" fill="none" stroke="#f6853a" stroke-width="1"/>
<rect x="752" y="119.2" width="1" height="9.4" fill="#f6853a"/>
<rect x="751" y="124" width="3" height="2" fill="#f6853a"/>
<rect x="756" y="119.2" width="1" height="7.3" fill="#f6853a"/>
<rect x="760" y="118" width="1" height="10.6" fill="#f6853a"/>
<rect x="759" y="122.7" width="3" height="2" fill="#f6853a"/>
<rect x="765" y="118" width="1" height="7.5" fill="#f6853a"/>
<rect x="764" y="121.9" width="3" height="2" fill="#f6853a"/>
<rect x="769" y="117.5" width="1" height="4.7" fill="#f6853a"/>
<rect x="769" y="129" width="1" height="2.8" fill="#f6853a"/>
<rect x="768.5" y="122.7" width="2" height="5.8" fill="none" stroke="#f6853a" stroke-width="1"/>
<rect x="773" y="125.8" width="1" height="2.1" fill="#f6853a"/>
<rect x="773" y="134.5" width="1" height="1.9" fill="#f6853a"/>
<rect x="772.5" y="128.4" width="2" height="5.6" fill="none" stroke="#f6853a" stroke-width="1"/>
<rect x="777" y="123" width="1" height="11.8" fill="#f6853a"/>
<rect x="776" y="133.5" width="3" height="2" fill="#f6853a"/>
<rect x="781" y="126.4" width="1" height="10" fill="#f6853a"/>
<rect x="780" y="133.4" width="3" height="2" fill="#f6853a"/>
<rect x="785" y="131.25" width="1" height="2.75" fill="#f6853a"/>
<rect x="785" y="146.5" width="1" height="5.2" fill="#f6853a"/>
<rect x="784.5" y="134.5" width="2" height="11.5" fill="none" stroke="#f6853a" stroke-width="1"/>
<rect x="789" y="143" width="1" height="2.1" fill="#f6853a"/>
<rect x="788.5" y="145.6" width="2" height="8.3" fill="none" stroke="#f6853a" stroke-width="1"/>
<rect x="793" y="145.8" width="1" height="7.7" fill="#f6853a"/>
<rect x="792" y="150" width="3" height="2" fill="#f6853a"/>
<rect x="797" y="149.3" width="1" height="2.4" fill="#f6853a"/>
<rect x="797" y="160.4" width="1" height="4.2" fill="#f6853a"/>
<rect x="796.5" y="152.2" width="2" height="7.7" fill="none" stroke="#f6853a" stroke-width="1"/>
<rect x="801" y="150.3" width="1" height="13.9" fill="#f6853a"/>
<rect x="800.5" y="153.5" width="2" height="5.7" fill="#ffac6b" stroke="#f6853a" stroke-width="1"/>
<rect x="806" y="151.1" width="1" height="0.9" fill="#f6853a"/>
<rect x="805.5" y="152.5" width="2" height="15.75" fill="none" stroke="#f6853a" stroke-width="1"/>
<rect x="810" y="166.4" width="1" height="3" fill="#f6853a"/>
<rect x="810" y="173.6" width="1" height="5.3" fill="#f6853a"/>
<rect x="809.5" y="169.9" width="2" height="3.2" fill="none" stroke="#f6853a" stroke-width="1"/>
<rect x="814" y="168.75" width="1" height="4.85" fill="#f6853a"/>
<rect x="818" y="165.3" width="1" height="10.4" fill="#f6853a"/>
<rect x="817" y="170.8" width="3" height="2" fill="#f6853a"/>
<rect x="822" y="162.5" width="1" height="13.2" fill="#f6853a"/>
<rect x="821" y="166.4" width="3" height="3" fill="#f6853a"/>
<rect x="826" y="158.3" width="1" height="13.2" fill="#f6853a"/>
<rect x="825" y="163.9" width="3" height="2" fill="#f6853a"/>
<rect x="830" y="155.6" width="1" height="11.1" fill="#f6853a"/>
<rect x="829.5" y="158.8" width="2" height="6" fill="#ffac6b" stroke="#f6853a" stroke-width="1"/>
<rect x="834" y="148.9" width="1" height="9.4" fill="#f6853a"/>
<rect x="833" y="152" width="3" height="2.2" fill="#f6853a"/>
<rect x="838" y="153.5" width="1" height="2.1" fill="#f6853a"/>
<rect x="838" y="163.2" width="1" height="0.7" fill="#f6853a"/>
<rect x="837.5" y="156.1" width="2" height="6.6" fill="none" stroke="#f6853a" stroke-width="1"/>
<rect x="843" y="155.6" width="1" height="6.9" fill="#f6853a"/>
<rect x="843" y="166" width="1" height="0.9" fill="#f6853a"/>
<rect x="842.5" y="163" width="2" height="2.5" fill="none" stroke="#f6853a" stroke-width="1"/>
<rect x="847" y="162.2" width="1" height="12.8" fill="#f6853a"/>
<rect x="846" y="165" width="3" height="2" fill="#f6853a"/>
</g>
<polyline points="15,122.3 22,118.9 29,116.3 35,114.9 42,115.9 50,119.9 57,122.9 66,122.9 78,123.9 90,126.3 99.8,125.9 109.8,125.5 119.8,124.3 129.8,122.3 139.8,120.9 149.8,120.3 161.7,118.9 171.7,117.9 179.7,116.9 189.7,116.9 199.7,115.5 209.6,114.9 219.6,114.9 229.6,116.3 240,115.3 250,114.7 270,114.7 290,114.1 306,114.1 314.3,115.7 324.3,119.1 334.4,121.1 344.4,124.7 354.4,129.1 364.5,134.1 374.5,140.2 384.5,145.2 394.6,151.2 404.6,156.2 414.6,163.2 424.7,169.3 432.7,176.3 440.7,180.3 450.7,183.3 456,186.3 462,188.3 470,189.3 480,188.7 490,187.9 500,185.9 510,184.7 520,183.2 530,181.2 540.3,178.8 550.3,178.2 560.4,176.8 570.4,176.2 580.4,174.6 590.5,171.2 600.5,169.8 606.5,168.6 620.6,168.2 626.6,166.8 640.6,166.6 646,165 660.7,165.4 670.7,166 676,166 680,164.6 690,163.85 700,162.6 710,161.2 720.2,160.6 730.2,158.6 740.2,155.2 750.3,152.6 760.3,149.8 770.3,148.2 778.4,146.8 786.4,147.2 796.4,148.2 806.5,149.2 816.5,151.2 824.5,153.2 834.6,153.2 842.6,153.8 846.6,155.2" fill="none" stroke="#bd1f2b" stroke-width="1.45" stroke-linejoin="round"/>
<polyline points="15,118.3 22,112.9 29,108.9 34.4,104.3 40,108.3 47,116.3 53,123.5 60,128.3 70,128.3 80,128.9 90,132.9 97.8,131.5 104.8,130.9 109.8,128.3 119.8,124.9 129.8,120.9 139.8,116.9 149.8,116.3 161.7,113.5 171.7,112.3 177.7,110.5 189.7,110.5 197.7,108.3 209.6,107.9 215.6,109.9 223.6,112.3 231.6,115.5 240,114.7 248,113.5 260,114.1 270,114.1 282,113.5 296,113.1 306,113.7 312.3,115.7 320.3,120.1 330.3,125.1 340.4,131.1 350.4,138.1 360.4,147.6 370.5,157.6 380.5,166.2 390.5,178.3 400.6,186.3 410.6,194.9 420.6,203.4 430.7,213.4 436.7,219 446.7,219.4 456,220.8 461,222 466,219.4 474,214.4 486,209.3 494,201.3 502,195.3 510,190.3 520,184.7 530,180.6 538.3,177.2 544.3,174.6 554.4,174.2 562.4,172.2 572.4,169.8 580.4,166.6 590.5,162.6 596.5,160.6 604.5,159.8 610.5,158.8 630.6,158.8 650.7,158.8 654.7,159.8 660.7,162.6 666.7,164.6 672.8,162.6 680,161.4 684,160.2 692,156.6 700,155.8 710,154.8 720.2,154.2 728.2,150.2 736.2,146.2 746.3,141.8 756.3,138.2 764.3,135.2 774.4,134.75 782.4,135.2 790.4,137.2 798.4,141.2 808.5,145.8 816.5,149.8 824.5,153.8 832.6,154.6 840.6,155.2 846.6,157.2" fill="none" stroke="#0a0ad2" stroke-width="1.25" stroke-linejoin="round"/>
<rect x="16" y="100.15" width="883" height="1.7" fill="#b8202c" opacity="0.85"/>
<rect x="16" y="168" width="883" height="1" fill="#ececec" opacity="0.92" shape-rendering="crispEdges"/>
<rect x="16" y="172.15" width="883" height="1.7" fill="#1fc41f" opacity="0.9"/>
</g>
<rect x="16" y="40" width="136" height="13" fill="#3a424b"/><rect x="155" y="40" width="136" height="13" fill="#3a424b"/>
<text x="16.6" y="51" class="lg" fill="#0000e6" textLength="134" lengthAdjust="spacingAndGlyphs">Exponential_Moving_Average</text>
<text x="155.8" y="51" class="lg" fill="#e6121f" textLength="134" lengthAdjust="spacingAndGlyphs">Exponential_Moving_Average</text>
<g shape-rendering="crispEdges"><rect x="15" y="39" width="31" height="22" fill="#f3f3f3"/><rect x="16" y="40" width="29" height="3.5" fill="#dadadc"/></g>
<rect x="19.5" y="47.5" width="9" height="9" rx="1.8" fill="url(#redsq)" stroke="#a8141e" stroke-width="1"/>
<rect x="32.5" y="47.5" width="9" height="9" rx="1.8" fill="url(#bluesq)" stroke="#1468a4" stroke-width="1"/>
<g clip-path="url(#cd)">
<line x1="16" y1="291.5" x2="852" y2="291.5" stroke="#d0202c" stroke-opacity="0.75" stroke-width="1" stroke-dasharray="4 3 1 3" shape-rendering="crispEdges"/>
<g shape-rendering="crispEdges" fill="#d0202c">
<rect x="43" y="289" width="1" height="2.5"/>
<rect x="47" y="291.5" width="1" height="8.33"/>
<rect x="51" y="291.5" width="1" height="10.38"/>
<rect x="55" y="291.5" width="1" height="11.06"/>
<rect x="59" y="291.5" width="1" height="8.98"/>
<rect x="63" y="291.5" width="1" height="6.55"/>
<rect x="67" y="291.5" width="1" height="4.5"/>
<rect x="71" y="291.5" width="1" height="2.7"/>
<rect x="75" y="291.5" width="1" height="1.7"/>
<rect x="80" y="291.5" width="1" height="0.86"/>
<rect x="100" y="289.9" width="1" height="1.6"/>
<rect x="104" y="289.51" width="1" height="1.99"/>
<rect x="108" y="289.15" width="1" height="2.35"/>
<rect x="112" y="288.91" width="1" height="2.59"/>
<rect x="116" y="288.81" width="1" height="2.69"/>
<rect x="121" y="288.47" width="1" height="3.03"/>
<rect x="125" y="288.17" width="1" height="3.33"/>
<rect x="129" y="287.91" width="1" height="3.59"/>
<rect x="133" y="287.75" width="1" height="3.75"/>
<rect x="137" y="287.64" width="1" height="3.86"/>
<rect x="141" y="288.28" width="1" height="3.22"/>
<rect x="145" y="289.98" width="1" height="1.52"/>
<rect x="186" y="291.5" width="1" height="1.07"/>
<rect x="190" y="291.5" width="1" height="1.95"/>
<rect x="194" y="291.5" width="1" height="1.47"/>
<rect x="198" y="291.5" width="1" height="0.9"/>
<rect x="215" y="291.5" width="1" height="1.83"/>
<rect x="219" y="291.5" width="1" height="3.67"/>
<rect x="223" y="291.5" width="1" height="4.27"/>
<rect x="227" y="291.5" width="1" height="4.69"/>
<rect x="231" y="291.5" width="1" height="4.49"/>
<rect x="235" y="291.5" width="1" height="3.38"/>
<rect x="240" y="291.5" width="1" height="2.75"/>
<rect x="244" y="291.5" width="1" height="1.16"/>
<rect x="248" y="291.5" width="1" height="0.86"/>
<rect x="252" y="291.5" width="1" height="0.94"/>
<rect x="256" y="291.5" width="1" height="1.02"/>
<rect x="260" y="291.5" width="1" height="1.1"/>
<rect x="264" y="291.5" width="1" height="0.95"/>
<rect x="268" y="291.5" width="1" height="0.79"/>
<rect x="272" y="291.5" width="1" height="0.72"/>
<rect x="276" y="291.5" width="1" height="0.64"/>
<rect x="309" y="291.5" width="1" height="1.67"/>
<rect x="313" y="291.5" width="1" height="2.84"/>
<rect x="317" y="291.5" width="1" height="4.12"/>
<rect x="322" y="291.5" width="1" height="5.13"/>
<rect x="326" y="291.5" width="1" height="5.06"/>
<rect x="330" y="291.5" width="1" height="4.83"/>
<rect x="334" y="291.5" width="1" height="4.49"/>
<rect x="338" y="291.5" width="1" height="5.42"/>
<rect x="342" y="291.5" width="1" height="5.96"/>
<rect x="346" y="291.5" width="1" height="5.76"/>
<rect x="350" y="291.5" width="1" height="5.35"/>
<rect x="354" y="291.5" width="1" height="5.15"/>
<rect x="358" y="291.5" width="1" height="6.14"/>
<rect x="363" y="291.5" width="1" height="7.03"/>
<rect x="367" y="291.5" width="1" height="7.46"/>
<rect x="371" y="291.5" width="1" height="7.73"/>
<rect x="375" y="291.5" width="1" height="5.05"/>
<rect x="379" y="291.5" width="1" height="3.97"/>
<rect x="383" y="291.5" width="1" height="4.32"/>
<rect x="387" y="291.5" width="1" height="5.01"/>
<rect x="391" y="291.5" width="1" height="4.37"/>
<rect x="395" y="291.5" width="1" height="3.69"/>
<rect x="399" y="291.5" width="1" height="2.91"/>
<rect x="404" y="291.5" width="1" height="1.64"/>
<rect x="408" y="291.5" width="1" height="2.46"/>
<rect x="412" y="291.5" width="1" height="3.03"/>
<rect x="416" y="291.5" width="1" height="3"/>
<rect x="420" y="291.5" width="1" height="2.44"/>
<rect x="424" y="291.5" width="1" height="1.53"/>
<rect x="428" y="291.5" width="1" height="1.1"/>
<rect x="432" y="291.5" width="1" height="1.9"/>
<rect x="436" y="291.5" width="1" height="1.9"/>
<rect x="445" y="289.19" width="1" height="2.31"/>
<rect x="449" y="287.63" width="1" height="3.87"/>
<rect x="453" y="286.98" width="1" height="4.52"/>
<rect x="457" y="287.26" width="1" height="4.24"/>
<rect x="461" y="286.84" width="1" height="4.66"/>
<rect x="465" y="284.85" width="1" height="6.65"/>
<rect x="469" y="283.15" width="1" height="8.35"/>
<rect x="473" y="281.99" width="1" height="9.51"/>
<rect x="477" y="282.64" width="1" height="8.86"/>
<rect x="482" y="283.21" width="1" height="8.29"/>
<rect x="486" y="282.95" width="1" height="8.55"/>
<rect x="490" y="282.27" width="1" height="9.23"/>
<rect x="494" y="282.37" width="1" height="9.13"/>
<rect x="498" y="282.99" width="1" height="8.51"/>
<rect x="502" y="283.42" width="1" height="8.08"/>
<rect x="506" y="283.68" width="1" height="7.82"/>
<rect x="510" y="285.25" width="1" height="6.25"/>
<rect x="514" y="286.88" width="1" height="4.62"/>
<rect x="518" y="287.67" width="1" height="3.83"/>
<rect x="523" y="288.56" width="1" height="2.94"/>
<rect x="527" y="290.16" width="1" height="1.34"/>
<rect x="531" y="290.8" width="1" height="0.7"/>
<rect x="551" y="291.5" width="1" height="1.98"/>
<rect x="555" y="291.5" width="1" height="2.74"/>
<rect x="559" y="291.5" width="1" height="2.43"/>
<rect x="564" y="291.5" width="1" height="2.36"/>
<rect x="568" y="291.5" width="1" height="2.47"/>
<rect x="572" y="291.5" width="1" height="2.6"/>
<rect x="576" y="291.5" width="1" height="2.07"/>
<rect x="580" y="291.5" width="1" height="1.73"/>
<rect x="584" y="291.5" width="1" height="1.57"/>
<rect x="588" y="291.5" width="1" height="1.4"/>
<rect x="592" y="291.5" width="1" height="1.23"/>
<rect x="596" y="291.5" width="1" height="1.05"/>
<rect x="600" y="291.5" width="1" height="0.93"/>
<rect x="605" y="291.5" width="1" height="1.27"/>
<rect x="609" y="291.5" width="1" height="1.67"/>
<rect x="613" y="291.5" width="1" height="2.27"/>
<rect x="617" y="291.5" width="1" height="2.83"/>
<rect x="621" y="291.5" width="1" height="3.31"/>
<rect x="625" y="291.5" width="1" height="3.44"/>
<rect x="629" y="291.5" width="1" height="3.02"/>
<rect x="633" y="291.5" width="1" height="2.74"/>
<rect x="637" y="291.5" width="1" height="2.59"/>
<rect x="642" y="291.5" width="1" height="2.17"/>
<rect x="646" y="291.5" width="1" height="1.81"/>
<rect x="650" y="291.5" width="1" height="1.76"/>
<rect x="654" y="291.5" width="1" height="3.38"/>
<rect x="658" y="291.5" width="1" height="4.32"/>
<rect x="662" y="291.5" width="1" height="4.35"/>
<rect x="666" y="291.5" width="1" height="4.02"/>
<rect x="670" y="291.5" width="1" height="2.46"/>
<rect x="674" y="291.5" width="1" height="1.47"/>
<rect x="678" y="291.5" width="1" height="0.79"/>
<rect x="687" y="290.82" width="1" height="0.68"/>
<rect x="691" y="290.4" width="1" height="1.1"/>
<rect x="695" y="290.4" width="1" height="1.1"/>
<rect x="699" y="290.65" width="1" height="0.85"/>
<rect x="715" y="290.81" width="1" height="0.69"/>
<rect x="719" y="290.6" width="1" height="0.9"/>
<rect x="724" y="290.64" width="1" height="0.86"/>
<rect x="728" y="290.24" width="1" height="1.26"/>
<rect x="732" y="289.53" width="1" height="1.97"/>
<rect x="736" y="289.11" width="1" height="2.39"/>
<rect x="740" y="288.79" width="1" height="2.71"/>
<rect x="744" y="288.73" width="1" height="2.77"/>
<rect x="748" y="288.89" width="1" height="2.61"/>
<rect x="752" y="289.41" width="1" height="2.09"/>
<rect x="756" y="289.82" width="1" height="1.68"/>
<rect x="760" y="290.07" width="1" height="1.43"/>
<rect x="765" y="290.5" width="1" height="1"/>
<rect x="773" y="291.5" width="1" height="1.37"/>
<rect x="777" y="291.5" width="1" height="2.36"/>
<rect x="781" y="291.5" width="1" height="3.35"/>
<rect x="785" y="291.5" width="1" height="4.29"/>
<rect x="789" y="291.5" width="1" height="5.03"/>
<rect x="793" y="291.5" width="1" height="5.92"/>
<rect x="797" y="291.5" width="1" height="6.26"/>
<rect x="801" y="291.5" width="1" height="6.38"/>
<rect x="806" y="291.5" width="1" height="6.46"/>
<rect x="810" y="291.5" width="1" height="6.65"/>
<rect x="814" y="291.5" width="1" height="7.23"/>
<rect x="818" y="291.5" width="1" height="7.46"/>
<rect x="822" y="291.5" width="1" height="6.41"/>
<rect x="826" y="291.5" width="1" height="5.37"/>
<rect x="830" y="291.5" width="1" height="3.88"/>
<rect x="834" y="291.5" width="1" height="2.39"/>
<rect x="838" y="291.5" width="1" height="1.97"/>
<rect x="843" y="291.5" width="1" height="1.52"/>
<rect x="847" y="291.5" width="1" height="0.93"/>
</g>
<polyline points="43.85,290.5 55.8,302.4 64.2,300.6 72.5,298.6 80.8,297.5 89.2,297.5 97,296.2 104.8,293.4 113,291.3 121.6,288.9 129.4,286.4 137.2,284.5 143.4,284.2 148,286.4 160.6,287.3 166.9,285.3 182.5,285.3 190.3,287.3 198,287.6 206,286 213.75,287.6 220,291.5 227.8,293.9 232.5,295.4 240.3,294.2 245,292.3 260.6,292.6 268.4,292.3 284,292 299.7,292 305.6,292 313.4,294.2 321.25,298.25 329,300.1 333.75,300.4 341.6,304 349.4,306.1 355.6,307.6 363.4,311.8 371.25,315.4 375.9,314.2 380.6,314.2 388.4,317.3 399.4,317.3 404,316 413.4,318.4 418.1,318.4 422.8,317.3 427.5,317.3 432.2,318.9 436.9,318.9 443.1,314.2 450.9,309.5 457.2,308.25 461.9,306.4 467.8,300.9 474,295.4 483.4,292 491.25,286 497.5,282.2 506.9,279 514.7,278.6 522.5,278.25 527.2,279.3 547.5,279.3 553.75,282.2 569.4,282.6 574,283.7 585,283.25 600.6,282.6 608.4,283.25 616.25,285.3 624,287.3 631.9,287.3 637.8,287.9 650.3,288.4 658.1,292.3 665.9,294.7 672.2,292.3 681.6,290.75 689.4,288.9 695.6,287.3 708.1,287.6 717.5,286.4 725.3,286.4 731.6,284.5 739.4,282.6 747.2,281.4 755,281.1 767.5,281.4 776.9,284.5 787.8,288.4 795.6,292 803.4,294.7 811.25,297.8 817.5,300.4 826.9,300.4 834.7,298.6 842.5,297.8 848,297.8" fill="none" stroke="#000088" stroke-width="1" stroke-linejoin="round"/>
<polyline points="15.5,285.5 15.5,290.5" fill="none" stroke="#000088" stroke-width="1.2"/>
<g fill="#e81822">
<circle cx="14.7" cy="285" r="1.3"/><circle cx="18.9" cy="292.8" r="1.3"/>
<circle cx="47.2" cy="285.5" r="1.65"/>
<circle cx="51.3" cy="287.54" r="1.65"/>
<circle cx="55.4" cy="290.95" r="1.65"/>
<circle cx="59.51" cy="292.62" r="1.65"/>
<circle cx="63.61" cy="294.17" r="1.65"/>
<circle cx="67.71" cy="295.26" r="1.65"/>
<circle cx="71.81" cy="296.07" r="1.65"/>
<circle cx="75.91" cy="296.44" r="1.65"/>
<circle cx="80.02" cy="296.74" r="1.65"/>
<circle cx="84.12" cy="296.96" r="1.65"/>
<circle cx="88.22" cy="297.38" r="1.65"/>
<circle cx="92.32" cy="297.27" r="1.65"/>
<circle cx="96.42" cy="296.86" r="1.65"/>
<circle cx="100.53" cy="296.54" r="1.65"/>
<circle cx="104.63" cy="295.45" r="1.65"/>
<circle cx="108.73" cy="294.74" r="1.65"/>
<circle cx="112.83" cy="293.93" r="1.65"/>
<circle cx="116.94" cy="292.89" r="1.65"/>
<circle cx="121.04" cy="292.08" r="1.65"/>
<circle cx="125.14" cy="291.09" r="1.65"/>
<circle cx="129.24" cy="290.04" r="1.65"/>
<circle cx="133.34" cy="289.19" r="1.65"/>
<circle cx="137.45" cy="288.35" r="1.65"/>
<circle cx="141.55" cy="287.51" r="1.65"/>
<circle cx="145.65" cy="286.8" r="1.65"/>
<circle cx="149.75" cy="286.8" r="1.65"/>
<circle cx="153.86" cy="286.8" r="1.65"/>
<circle cx="157.96" cy="286.8" r="1.65"/>
<circle cx="162.06" cy="286.56" r="1.65"/>
<circle cx="166.16" cy="285.87" r="1.65"/>
<circle cx="170.26" cy="285.56" r="1.65"/>
<circle cx="174.37" cy="285.32" r="1.65"/>
<circle cx="178.47" cy="285.3" r="1.65"/>
<circle cx="182.57" cy="285.3" r="1.65"/>
<circle cx="186.67" cy="285.3" r="1.65"/>
<circle cx="190.77" cy="285.37" r="1.65"/>
<circle cx="194.88" cy="286" r="1.65"/>
<circle cx="198.98" cy="286.5" r="1.65"/>
<circle cx="203.08" cy="286.5" r="1.65"/>
<circle cx="207.18" cy="286.5" r="1.65"/>
<circle cx="211.29" cy="286.5" r="1.65"/>
<circle cx="215.39" cy="286.79" r="1.65"/>
<circle cx="219.49" cy="287.51" r="1.65"/>
<circle cx="223.59" cy="288.34" r="1.65"/>
<circle cx="227.69" cy="289.18" r="1.65"/>
<circle cx="231.8" cy="290.68" r="1.65"/>
<circle cx="235.9" cy="291.5" r="1.65"/>
<circle cx="240" cy="291.5" r="1.65"/>
<circle cx="244.1" cy="291.5" r="1.65"/>
<circle cx="248.21" cy="291.5" r="1.65"/>
<circle cx="252.31" cy="291.5" r="1.65"/>
<circle cx="256.41" cy="291.5" r="1.65"/>
<circle cx="260.51" cy="291.5" r="1.65"/>
<circle cx="264.61" cy="291.5" r="1.65"/>
<circle cx="268.72" cy="291.5" r="1.65"/>
<circle cx="272.82" cy="291.5" r="1.65"/>
<circle cx="276.92" cy="291.5" r="1.65"/>
<circle cx="281.02" cy="291.5" r="1.65"/>
<circle cx="285.12" cy="291.5" r="1.65"/>
<circle cx="289.23" cy="291.5" r="1.65"/>
<circle cx="293.33" cy="291.5" r="1.65"/>
<circle cx="297.43" cy="291.5" r="1.65"/>
<circle cx="301.53" cy="291.5" r="1.65"/>
<circle cx="305.64" cy="291.5" r="1.65"/>
<circle cx="309.74" cy="291.5" r="1.65"/>
<circle cx="313.84" cy="291.59" r="1.65"/>
<circle cx="317.94" cy="292.43" r="1.65"/>
<circle cx="322.04" cy="293.3" r="1.65"/>
<circle cx="326.15" cy="294.36" r="1.65"/>
<circle cx="330.25" cy="295.35" r="1.65"/>
<circle cx="334.35" cy="296.18" r="1.65"/>
<circle cx="338.45" cy="297.14" r="1.65"/>
<circle cx="342.55" cy="298.29" r="1.65"/>
<circle cx="346.66" cy="299.6" r="1.65"/>
<circle cx="350.76" cy="301.08" r="1.65"/>
<circle cx="354.86" cy="302.28" r="1.65"/>
<circle cx="358.96" cy="303.27" r="1.65"/>
<circle cx="363.07" cy="304.59" r="1.65"/>
<circle cx="367.17" cy="306.07" r="1.65"/>
<circle cx="371.27" cy="307.66" r="1.65"/>
<circle cx="375.37" cy="309.29" r="1.65"/>
<circle cx="379.47" cy="310.23" r="1.65"/>
<circle cx="383.58" cy="311.06" r="1.65"/>
<circle cx="387.68" cy="312" r="1.65"/>
<circle cx="391.78" cy="312.93" r="1.65"/>
<circle cx="395.88" cy="313.61" r="1.65"/>
<circle cx="399.99" cy="314.22" r="1.65"/>
<circle cx="404.09" cy="314.38" r="1.65"/>
<circle cx="408.19" cy="314.61" r="1.65"/>
<circle cx="412.29" cy="315.09" r="1.65"/>
<circle cx="416.39" cy="315.4" r="1.65"/>
<circle cx="420.5" cy="315.4" r="1.65"/>
<circle cx="424.6" cy="315.77" r="1.65"/>
<circle cx="428.7" cy="316.61" r="1.65"/>
<circle cx="432.8" cy="317" r="1.65"/>
<circle cx="436.9" cy="317" r="1.65"/>
<circle cx="441.01" cy="316.3" r="1.65"/>
<circle cx="445.11" cy="315.29" r="1.65"/>
<circle cx="449.21" cy="314.39" r="1.65"/>
<circle cx="453.31" cy="313.54" r="1.65"/>
<circle cx="457.42" cy="312.41" r="1.65"/>
<circle cx="461.52" cy="311.21" r="1.65"/>
<circle cx="465.62" cy="309.59" r="1.65"/>
<circle cx="469.72" cy="307.54" r="1.65"/>
<circle cx="473.82" cy="305.07" r="1.65"/>
<circle cx="477.93" cy="302.84" r="1.65"/>
<circle cx="482.03" cy="300.79" r="1.65"/>
<circle cx="486.13" cy="298.46" r="1.65"/>
<circle cx="490.23" cy="296.01" r="1.65"/>
<circle cx="494.34" cy="293.25" r="1.65"/>
<circle cx="498.44" cy="290.39" r="1.65"/>
<circle cx="502.54" cy="288.57" r="1.65"/>
<circle cx="506.64" cy="286.9" r="1.65"/>
<circle cx="510.74" cy="285.05" r="1.65"/>
<circle cx="514.85" cy="283.22" r="1.65"/>
<circle cx="518.95" cy="282.24" r="1.65"/>
<circle cx="523.05" cy="281.31" r="1.65"/>
<circle cx="527.15" cy="280.62" r="1.65"/>
<circle cx="531.25" cy="280" r="1.65"/>
<circle cx="535.36" cy="279.58" r="1.65"/>
<circle cx="539.46" cy="279.3" r="1.65"/>
<circle cx="543.56" cy="279.3" r="1.65"/>
<circle cx="547.66" cy="279.3" r="1.65"/>
<circle cx="551.77" cy="279.3" r="1.65"/>
<circle cx="555.87" cy="279.52" r="1.65"/>
<circle cx="559.97" cy="279.93" r="1.65"/>
<circle cx="564.07" cy="280.1" r="1.65"/>
<circle cx="568.17" cy="280.1" r="1.65"/>
<circle cx="572.28" cy="280.69" r="1.65"/>
<circle cx="576.38" cy="281.53" r="1.65"/>
<circle cx="580.48" cy="281.7" r="1.65"/>
<circle cx="584.58" cy="281.7" r="1.65"/>
<circle cx="588.69" cy="281.7" r="1.65"/>
<circle cx="592.79" cy="281.7" r="1.65"/>
<circle cx="596.89" cy="281.7" r="1.65"/>
<circle cx="600.99" cy="281.7" r="1.65"/>
<circle cx="605.09" cy="281.7" r="1.65"/>
<circle cx="609.2" cy="281.79" r="1.65"/>
<circle cx="613.3" cy="282.26" r="1.65"/>
<circle cx="617.4" cy="282.76" r="1.65"/>
<circle cx="621.5" cy="283.35" r="1.65"/>
<circle cx="625.6" cy="283.86" r="1.65"/>
<circle cx="629.71" cy="284.28" r="1.65"/>
<circle cx="633.81" cy="284.76" r="1.65"/>
<circle cx="637.91" cy="285.32" r="1.65"/>
<circle cx="642.01" cy="285.89" r="1.65"/>
<circle cx="646.12" cy="286.43" r="1.65"/>
<circle cx="650.22" cy="286.64" r="1.65"/>
<circle cx="654.32" cy="287.03" r="1.65"/>
<circle cx="658.42" cy="288.08" r="1.65"/>
<circle cx="662.52" cy="289.31" r="1.65"/>
<circle cx="666.63" cy="290.4" r="1.65"/>
<circle cx="670.73" cy="290.4" r="1.65"/>
<circle cx="674.83" cy="290.4" r="1.65"/>
<circle cx="678.93" cy="290.4" r="1.65"/>
<circle cx="683.04" cy="290.33" r="1.65"/>
<circle cx="687.14" cy="290.12" r="1.65"/>
<circle cx="691.24" cy="289.53" r="1.65"/>
<circle cx="695.34" cy="288.47" r="1.65"/>
<circle cx="699.44" cy="288.25" r="1.65"/>
<circle cx="703.55" cy="288.08" r="1.65"/>
<circle cx="707.65" cy="287.92" r="1.65"/>
<circle cx="711.75" cy="287.62" r="1.65"/>
<circle cx="715.85" cy="287.3" r="1.65"/>
<circle cx="719.95" cy="287.3" r="1.65"/>
<circle cx="724.06" cy="287.26" r="1.65"/>
<circle cx="728.16" cy="286.79" r="1.65"/>
<circle cx="732.26" cy="286.31" r="1.65"/>
<circle cx="736.36" cy="285.73" r="1.65"/>
<circle cx="740.47" cy="285.15" r="1.65"/>
<circle cx="744.57" cy="284.57" r="1.65"/>
<circle cx="748.67" cy="283.96" r="1.65"/>
<circle cx="752.77" cy="283.27" r="1.65"/>
<circle cx="756.87" cy="282.83" r="1.65"/>
<circle cx="760.98" cy="282.67" r="1.65"/>
<circle cx="765.08" cy="282.34" r="1.65"/>
<circle cx="769.18" cy="281.86" r="1.65"/>
<circle cx="773.28" cy="281.94" r="1.65"/>
<circle cx="777.38" cy="282.31" r="1.65"/>
<circle cx="781.49" cy="282.79" r="1.65"/>
<circle cx="785.59" cy="283.32" r="1.65"/>
<circle cx="789.69" cy="284.24" r="1.65"/>
<circle cx="793.79" cy="285.25" r="1.65"/>
<circle cx="797.9" cy="286.53" r="1.65"/>
<circle cx="802" cy="287.84" r="1.65"/>
<circle cx="806.1" cy="289.31" r="1.65"/>
<circle cx="810.2" cy="290.74" r="1.65"/>
<circle cx="814.3" cy="291.84" r="1.65"/>
<circle cx="818.41" cy="292.94" r="1.65"/>
<circle cx="822.51" cy="293.99" r="1.65"/>
<circle cx="826.61" cy="295.03" r="1.65"/>
<circle cx="830.71" cy="295.64" r="1.65"/>
<circle cx="834.82" cy="296.2" r="1.65"/>
<circle cx="838.92" cy="296.2" r="1.65"/>
<circle cx="843.02" cy="296.28" r="1.65"/>
<circle cx="847.12" cy="296.87" r="1.65"/>
</g>
</g>
<circle cx="14.7" cy="285" r="1.3" fill="#e81822"/>
<text x="17.8" y="288.5" class="lg" fill="#000090" textLength="28" lengthAdjust="spacingAndGlyphs">MACD</text>
<g clip-path="url(#cr)">
<polygon points="15.7,391 15.7,367.4 18.5,366 20.9,354.9 22.7,348.3 26.5,353.2 30.7,350.8 34.5,350.4 36.9,362.9 38.65,374.7 41.8,379.6 46,386 50,388 54,385 57,379.6 59.8,374.7 63.3,369.2 66.8,366.7 71.3,371.6 75.8,368.1 80.7,370.2 87.6,373.3 94,367.8 95.9,364 99.8,366.9 103.75,364.8 108.4,364.4 112.3,358.6 117.8,360.6 121.7,359.4 126.4,358.6 133.4,354.7 137.3,357 141.25,352.6 145.3,366.4 149.6,363.3 154.5,365.3 158.75,364.8 161.9,362.5 166.25,354.7 170.6,362.5 174.5,366.4 178.3,359.2 182.5,362.8 186.9,364.8 190,365.3 194.7,362.2 199.4,364 203.3,362.5 207.2,362.8 211.1,362.2 215,375 219.7,379.7 224.4,374.7 227.5,375.3 231.4,378.1 235.3,371.9 240,364 243.9,362.5 247.8,362.5 251.7,364 256.4,368.75 260.3,370.6 264.2,371.9 268.4,365.3 272.8,367.2 276.7,367.2 280.6,365.3 285.6,361.4 289.2,365.9 293.9,366.9 297.8,371.9 301.7,367.5 306.4,372.7 311.9,376.6 313.1,378.1 317,389.4 321.7,384.4 325.6,384.8 329.5,385.9 334.2,378.1 338.1,390.3 342.8,388.3 346.7,388.75 351.4,391 356.9,391 363.9,391 367,391 371.7,391 375.6,390.6 378.75,389 382.7,391 387.3,391 391.25,385.9 395.2,389.4 399.8,387.5 404.5,385.2 407.7,391 411.6,391 416.25,391 420.6,382.5 424.8,386.7 428.75,390.6 432.7,391 435,391 436.6,389.8 440.5,369.5 444.4,371.9 449,372.2 453.75,375.3 460.8,375 464.7,360.6 468.6,363.3 473.3,358.1 477.2,359.4 481.9,359 485.8,357 490.2,350.5 494,351.25 501.9,350.5 506.6,355 513.6,351.25 518.3,353.1 522.2,350.5 527.7,357 534.7,353.4 539.4,349.2 543.3,353.1 547.2,360.9 551.9,365.6 555.8,364.4 559.7,357.5 564.4,355.5 568.3,358.6 573,364.8 576.9,357.8 581.25,353.1 585.5,355 589.4,353.9 592.5,356.25 596.4,350 600.3,365.3 605,359.4 609.7,359 613.6,364.8 617.8,368 621.7,366.4 625.6,369.5 629.5,362.5 633.4,362.2 642,365.3 650.6,364 654.5,379.7 657,383 659.2,379.7 662.3,371.6 666.25,372.7 670.9,363.3 678.75,359.7 682.7,362.2 687.3,355 693.6,357 703.75,367.2 707.7,361.7 711.6,364 719.4,361.25 723.3,358.6 728,348.4 732.7,353.1 744.4,348.4 749,352.3 753,353.1 760,351.25 764.7,351.25 769.4,357 773.3,364 781.9,364.6 785.7,373.8 789.7,381.25 793.4,378.4 797.8,384.4 801.25,376.25 806.25,385.9 811,388.75 818.4,385.2 822.3,380.5 826.6,378.9 830.2,372.7 834,371.1 838.75,376.25 842.7,378.1 847,379.7 847,391" fill="url(#rsig)"/>
<g fill="#0c0caa"><rect x="16" y="344.2" width="831" height="1.6"/><rect x="16" y="390.2" width="831" height="1.6"/></g>
<polyline points="15.7,367.4 18.5,366 20.9,354.9 22.7,348.3 26.5,353.2 30.7,350.8 34.5,350.4 36.9,362.9 38.65,374.7 41.8,379.6 46,386 50,388 54,385 57,379.6 59.8,374.7 63.3,369.2 66.8,366.7 71.3,371.6 75.8,368.1 80.7,370.2 87.6,373.3 94,367.8 95.9,364 99.8,366.9 103.75,364.8 108.4,364.4 112.3,358.6 117.8,360.6 121.7,359.4 126.4,358.6 133.4,354.7 137.3,357 141.25,352.6 145.3,366.4 149.6,363.3 154.5,365.3 158.75,364.8 161.9,362.5 166.25,354.7 170.6,362.5 174.5,366.4 178.3,359.2 182.5,362.8 186.9,364.8 190,365.3 194.7,362.2 199.4,364 203.3,362.5 207.2,362.8 211.1,362.2 215,375 219.7,379.7 224.4,374.7 227.5,375.3 231.4,378.1 235.3,371.9 240,364 243.9,362.5 247.8,362.5 251.7,364 256.4,368.75 260.3,370.6 264.2,371.9 268.4,365.3 272.8,367.2 276.7,367.2 280.6,365.3 285.6,361.4 289.2,365.9 293.9,366.9 297.8,371.9 301.7,367.5 306.4,372.7 311.9,376.6 313.1,378.1 317,389.4 321.7,384.4 325.6,384.8 329.5,385.9 334.2,378.1" fill="none" stroke="#ff8f1f" stroke-width="1.1" stroke-linejoin="round"/>
<polyline points="334.2,378.1 338.1,390.3" fill="none" stroke="#22e222" stroke-width="1.1" stroke-linejoin="round"/>
<polyline points="338.1,390.3 342.8,388.3 346.7,388.75" fill="none" stroke="#ff8f1f" stroke-width="1.1" stroke-linejoin="round"/>
<polyline points="346.7,388.75 351.4,391.9 356.9,395.3 363.9,402.7 367,401.6" fill="none" stroke="#22e222" stroke-width="1.1" stroke-linejoin="round"/>
<polyline points="367,401.6 371.7,396.1 375.6,390.6 378.75,389" fill="none" stroke="#ff8f1f" stroke-width="1.1" stroke-linejoin="round"/>
<polyline points="378.75,389 382.7,396.1 387.3,401.6" fill="none" stroke="#22e222" stroke-width="1.1" stroke-linejoin="round"/>
<polyline points="387.3,401.6 391.25,385.9 395.2,389.4 399.8,387.5 404.5,385.2" fill="none" stroke="#ff8f1f" stroke-width="1.1" stroke-linejoin="round"/>
<polyline points="404.5,385.2 407.7,392.5 411.6,394 416.25,394" fill="none" stroke="#22e222" stroke-width="1.1" stroke-linejoin="round"/>
<polyline points="416.25,394 420.6,382.5 424.8,386.7 428.75,390.6" fill="none" stroke="#ff8f1f" stroke-width="1.1" stroke-linejoin="round"/>
<polyline points="428.75,390.6 432.7,393.75 435,392.2" fill="none" stroke="#22e222" stroke-width="1.1" stroke-linejoin="round"/>
<polyline points="435,392.2 436.6,389.8 440.5,369.5 444.4,371.9 449,372.2 453.75,375.3 460.8,375 464.7,360.6 468.6,363.3 473.3,358.1 477.2,359.4 481.9,359 485.8,357 490.2,350.5 494,351.25 501.9,350.5 506.6,355 513.6,351.25 518.3,353.1 522.2,350.5 527.7,357 534.7,353.4 539.4,349.2 543.3,353.1 547.2,360.9 551.9,365.6 555.8,364.4 559.7,357.5 564.4,355.5 568.3,358.6 573,364.8 576.9,357.8 581.25,353.1 585.5,355 589.4,353.9 592.5,356.25 596.4,350 600.3,365.3 605,359.4 609.7,359 613.6,364.8 617.8,368 621.7,366.4 625.6,369.5 629.5,362.5 633.4,362.2 642,365.3 650.6,364 654.5,379.7 657,383 659.2,379.7 662.3,371.6 666.25,372.7 670.9,363.3 678.75,359.7 682.7,362.2 687.3,355 693.6,357 703.75,367.2 707.7,361.7 711.6,364 719.4,361.25 723.3,358.6 728,348.4 732.7,353.1 744.4,348.4 749,352.3 753,353.1 760,351.25 764.7,351.25 769.4,357 773.3,364 781.9,364.6 785.7,373.8 789.7,381.25 793.4,378.4 797.8,384.4 801.25,376.25 806.25,385.9 811,388.75 818.4,385.2 822.3,380.5 826.6,378.9 830.2,372.7 834,371.1 838.75,376.25 842.7,378.1 847,379.7" fill="none" stroke="#ff8f1f" stroke-width="1.1" stroke-linejoin="round"/>
</g>
<text x="17" y="339.5" class="lg" fill="#ee7d22" textLength="15.5" lengthAdjust="spacingAndGlyphs">RSI</text>
<rect x="15.5" y="380.5" width="60.5" height="19" rx="2.5" fill="url(#mlab)" stroke="#b4c8da" stroke-width="1"/>
<rect x="15" y="380" width="2" height="27" fill="#d3efec" shape-rendering="crispEdges"/>
<text x="46" y="394" class="ml" text-anchor="middle">Авг 2020</text>
<rect x="80.5" y="380.5" width="60.5" height="19" rx="2.5" fill="url(#mlab)" stroke="#b4c8da" stroke-width="1"/>
<rect x="80" y="380" width="2" height="27" fill="#d3efec" shape-rendering="crispEdges"/>
<text x="111" y="394" class="ml" text-anchor="middle">Сен 2020</text>
<rect x="621.5" y="380.5" width="60.5" height="19" rx="2.5" fill="url(#mlab)" stroke="#b4c8da" stroke-width="1"/>
<rect x="621" y="380" width="2" height="27" fill="#d3efec" shape-rendering="crispEdges"/>
<text x="652" y="394" class="ml" text-anchor="middle">Окт 2020</text>
<text x="907" y="56" class="ax">107.00</text>
<text x="907" y="93" class="ax">106.50</text>
<text x="907" y="130" class="ax">106.00</text>
<text x="907" y="203" class="ax">105.00</text>
<text x="907" y="240" class="ax">104.50</text>
<text x="907.5" y="298" class="ax">+0.0</text>
<text x="907.5" y="374" class="ax">50</text>
<rect x="899" y="158" width="48" height="21" fill="#ffffff" shape-rendering="crispEdges"/>
<text x="908" y="172" class="ax" style="fill:#2f3743;stroke:none">105.39</text>
<text x="29.5" y="426" class="ax" text-anchor="middle">28</text>
<text x="54.5" y="426" class="ax" text-anchor="middle">31</text>
<text x="79.5" y="426" class="ax" text-anchor="middle">1</text>
<text x="103.5" y="426" class="ax" text-anchor="middle">2</text>
<text x="128.5" y="426" class="ax" text-anchor="middle">3</text>
<text x="152.5" y="426" class="ax" text-anchor="middle">4</text>
<text x="177.5" y="426" class="ax" text-anchor="middle">7</text>
<text x="202.5" y="426" class="ax" text-anchor="middle">8</text>
<text x="226.5" y="426" class="ax" text-anchor="middle">9</text>
<text x="251.5" y="426" class="ax" text-anchor="middle">10</text>
<text x="275.5" y="426" class="ax" text-anchor="middle">11</text>
<text x="300.5" y="426" class="ax" text-anchor="middle">14</text>
<text x="325.5" y="426" class="ax" text-anchor="middle">15</text>
<text x="349.5" y="426" class="ax" text-anchor="middle">16</text>
<text x="374.5" y="426" class="ax" text-anchor="middle">17</text>
<text x="398.5" y="426" class="ax" text-anchor="middle">18</text>
<text x="423.5" y="426" class="ax" text-anchor="middle">21</text>
<text x="448.5" y="426" class="ax" text-anchor="middle">22</text>
<text x="472.5" y="426" class="ax" text-anchor="middle">23</text>
<text x="497.5" y="426" class="ax" text-anchor="middle">24</text>
<text x="522.5" y="426" class="ax" text-anchor="middle">25</text>
<text x="546.5" y="426" class="ax" text-anchor="middle">28</text>
<text x="571.5" y="426" class="ax" text-anchor="middle">29</text>
<text x="595.5" y="426" class="ax" text-anchor="middle">30</text>
<text x="620.5" y="426" class="ax" text-anchor="middle">1</text>
<text x="645.5" y="426" class="ax" text-anchor="middle">2</text>
<text x="669.5" y="426" class="ax" text-anchor="middle">5</text>
<text x="694.5" y="426" class="ax" text-anchor="middle">6</text>
<text x="718.5" y="426" class="ax" text-anchor="middle">7</text>
<text x="743.5" y="426" class="ax" text-anchor="middle">8</text>
<text x="768.5" y="426" class="ax" text-anchor="middle">9</text>
<text x="792.5" y="426" class="ax" text-anchor="middle">12</text>
<text x="817.5" y="426" class="ax" text-anchor="middle">13</text>
<text x="842.5" y="426" class="ax" text-anchor="middle">14</text>
<text x="866.5" y="426" class="ax" text-anchor="middle">15</text>
<text x="891.5" y="426" class="ax" text-anchor="middle">16</text>
</svg>
</div>
</body>
</html>
